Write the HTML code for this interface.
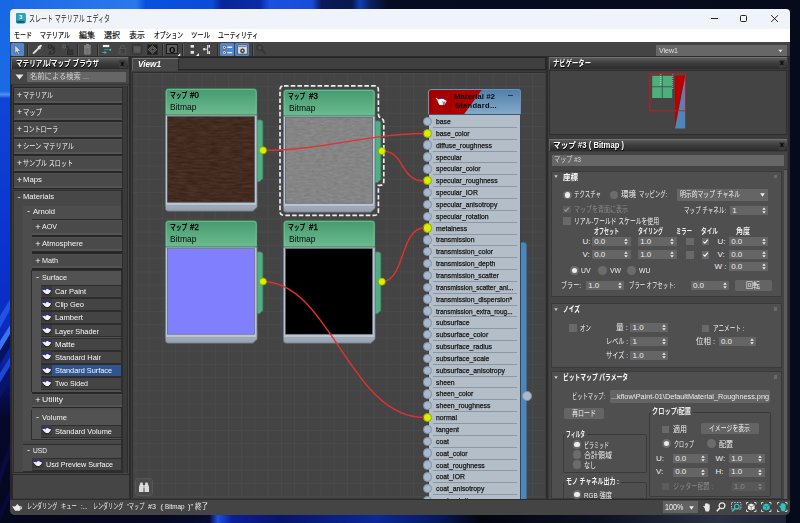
<!DOCTYPE html>
<html lang="ja">
<head>
<meta charset="utf-8">
<title>スレート マテリアル エディタ</title>
<style>
html,body{margin:0;padding:0;}
body{width:800px;height:523px;overflow:hidden;position:relative;background:#050a1c;font-family:"Liberation Sans","Noto Sans CJK JP",sans-serif;}
.r{position:absolute;box-sizing:border-box;}
.t{position:absolute;white-space:nowrap;transform-origin:0 50%;letter-spacing:0;}
svg{position:absolute;overflow:visible;}
#desk{position:absolute;left:0;top:0;width:800px;height:523px;}
#win{position:absolute;left:9.5px;top:9px;width:780.5px;height:505.8px;border-radius:4px 4px 5px 5px;overflow:hidden;background:#444444;}
#abs{position:absolute;left:-9.5px;top:-9px;width:800px;height:523px;}
</style>
</head>
<body>
<svg id="desk" width="800" height="523" viewBox="0 0 800 523">
<defs>
<linearGradient id="dgt" x1="0" x2="1" y1="0" y2="0">
<stop offset="0" stop-color="#1a68e4"/><stop offset="0.1" stop-color="#2572ea"/><stop offset="0.17" stop-color="#2a78ec"/><stop offset="0.182" stop-color="#0a50e0"/><stop offset="0.265" stop-color="#0a4cd8"/><stop offset="0.277" stop-color="#08259a"/><stop offset="0.325" stop-color="#0a2aa8"/><stop offset="0.337" stop-color="#1a50e0"/><stop offset="0.39" stop-color="#1a4cd8"/><stop offset="0.402" stop-color="#0a1a5a"/><stop offset="0.44" stop-color="#091850"/><stop offset="0.45" stop-color="#1040b0"/><stop offset="0.463" stop-color="#0a2060"/><stop offset="0.485" stop-color="#060d22"/><stop offset="1" stop-color="#050b1a"/>
</linearGradient>
<linearGradient id="dgl" x1="0" x2="0" y1="0" y2="1">
<stop offset="0" stop-color="#1668e3"/><stop offset="0.174" stop-color="#1a6ae6"/><stop offset="0.181" stop-color="#4a92f0"/><stop offset="0.188" stop-color="#0f45d6"/><stop offset="0.5" stop-color="#0a32cc"/><stop offset="0.62" stop-color="#0a2cc0"/><stop offset="0.70" stop-color="#0a20a0"/><stop offset="0.745" stop-color="#080f58"/><stop offset="0.8" stop-color="#05082a"/><stop offset="1" stop-color="#04081c"/>
</linearGradient>
<linearGradient id="dgb" x1="0" x2="1" y1="0" y2="0">
<stop offset="0" stop-color="#04061a"/><stop offset="0.2" stop-color="#050820"/><stop offset="0.262" stop-color="#060c34"/><stop offset="0.272" stop-color="#1f4fe0"/><stop offset="0.29" stop-color="#0b1e96"/><stop offset="0.35" stop-color="#08146a"/><stop offset="0.47" stop-color="#0a2896"/><stop offset="0.55" stop-color="#06185a"/><stop offset="0.6" stop-color="#03050f"/><stop offset="0.75" stop-color="#0c1222"/><stop offset="0.9" stop-color="#2a3142"/><stop offset="1" stop-color="#1c2334"/>
</linearGradient>
</defs>
<rect x="0" y="0" width="800" height="523" fill="#050b1a"/>
<rect x="0" y="0" width="800" height="12" fill="url(#dgt)"/>
<rect x="0" y="510" width="800" height="13" fill="url(#dgb)"/>
<rect x="0" y="0" width="14" height="523" fill="url(#dgl)"/>
<rect x="786" y="0" width="14" height="523" fill="#050b1a"/>
<g>
<path d="M0 328L12 306V296L0 316Z" fill="#2052e6"/>
<path d="M0 351L12 331V322L0 341Z" fill="#3a72f2"/>
<path d="M0 364L12 344V331L0 351Z" fill="#07125e"/>
<path d="M0 383L12 363V354L0 373Z" fill="#1c46d4"/>
<path d="M0 398L12 378V363L0 383Z" fill="#08146a"/>
<path d="M0 484L12 450V438L0 470Z" fill="#080a40"/>
<path d="M0 521L12 494V484L0 510Z" fill="#07093a"/>
</g>
</svg>
<div id="win"><div id="abs">
<div class="r" style="left:9px;top:9px;width:782px;height:20px;background:#f0f3fa;"></div>
<div class="r" style="left:9px;top:29px;width:782px;height:13px;background:#ffffff;"></div>
<svg style="left:15.6px;top:13.4px" width="9.6" height="10.4" viewBox="0 0 9.6 10.4"><rect x="0" y="0" width="9.6" height="10.4" rx="1.6" fill="#167a92"/><rect x="0" y="0" width="9.6" height="7.6" rx="1.6" fill="#2aa3bf"/><rect x="0" y="5" width="9.6" height="2.6" fill="#2aa3bf"/><rect x="1.8" y="8.2" width="6" height="1.3" fill="#0c5668"/></svg>
<span id="t1" class="t " style="left:18.9px;top:12.2px;font-size:6px;line-height:10px;color:#ffffff;font-weight:700;">3</span>
<span id="t2" class="t " style="left:29px;top:12.8px;font-size:9px;line-height:13px;color:#1a1a1a;font-weight:400;transform:scaleX(0.6678);">スレート マテリアル エディタ</span>
<svg style="left:700px;top:9px" width="90" height="20" viewBox="0 0 90 20">
<path d="M11 9.5H18" stroke="#222" stroke-width="1" fill="none"/>
<rect x="40.5" y="6.5" width="6" height="6" rx="1" stroke="#222" stroke-width="1" fill="none"/>
<path d="M71.2 6.2L78 13M78 6.2L71.2 13" stroke="#222" stroke-width="1" fill="none"/>
</svg>
<span id="t3" class="t " style="left:14px;top:30.2px;font-size:8px;line-height:12px;color:#000000;font-weight:400;transform:scaleX(0.7500);-webkit-text-stroke:0.15px #000;">モード</span>
<span id="t4" class="t " style="left:40px;top:30.2px;font-size:8px;line-height:12px;color:#000000;font-weight:400;transform:scaleX(0.7515);-webkit-text-stroke:0.15px #000;">マテリアル</span>
<span id="t5" class="t " style="left:79px;top:30.2px;font-size:8px;line-height:12px;color:#000000;font-weight:400;transform:scaleX(1.0000);-webkit-text-stroke:0.15px #000;">編集</span>
<span id="t6" class="t " style="left:104px;top:30.2px;font-size:8px;line-height:12px;color:#000000;font-weight:400;transform:scaleX(1.0000);-webkit-text-stroke:0.15px #000;">選択</span>
<span id="t7" class="t " style="left:129px;top:30.2px;font-size:8px;line-height:12px;color:#000000;font-weight:400;transform:scaleX(1.0000);-webkit-text-stroke:0.15px #000;">表示</span>
<span id="t8" class="t " style="left:154px;top:30.2px;font-size:8px;line-height:12px;color:#000000;font-weight:400;transform:scaleX(0.7250);-webkit-text-stroke:0.15px #000;">オプション</span>
<span id="t9" class="t " style="left:191px;top:30.2px;font-size:8px;line-height:12px;color:#000000;font-weight:400;transform:scaleX(0.7917);-webkit-text-stroke:0.15px #000;">ツール</span>
<span id="t10" class="t " style="left:218px;top:30.2px;font-size:8px;line-height:12px;color:#000000;font-weight:400;transform:scaleX(0.7267);-webkit-text-stroke:0.15px #000;">ユーティリティ</span>
<div class="r" style="left:9px;top:42px;width:782px;height:15px;background:#444444;"></div>
<div class="r" style="left:11px;top:43px;width:13.3px;height:12.8px;background:#4f87d2;border-radius:1.5px;"></div>
<svg style="left:11px;top:43px" width="14" height="13" viewBox="0 0 14 13"><path d="M3.8 2V10.4L5.9 8.6L7.3 11.5L8.6 10.9L7.3 8.1H9.9Z" fill="#d6d6d6" stroke="#4a4a4a" stroke-width="0.5"/></svg>
<div class="r" style="left:27px;top:44px;width:1px;height:12px;background:#2a2a2a;"></div>
<div class="r" style="left:28px;top:44px;width:1px;height:12px;background:#5a5a5a;"></div>
<div class="r" style="left:76.5px;top:44px;width:1px;height:12px;background:#2a2a2a;"></div>
<div class="r" style="left:77.5px;top:44px;width:1px;height:12px;background:#5a5a5a;"></div>
<div class="r" style="left:97px;top:44px;width:1px;height:12px;background:#2a2a2a;"></div>
<div class="r" style="left:98px;top:44px;width:1px;height:12px;background:#5a5a5a;"></div>
<div class="r" style="left:162px;top:44px;width:1px;height:12px;background:#2a2a2a;"></div>
<div class="r" style="left:163px;top:44px;width:1px;height:12px;background:#5a5a5a;"></div>
<div class="r" style="left:181.5px;top:44px;width:1px;height:12px;background:#2a2a2a;"></div>
<div class="r" style="left:182.5px;top:44px;width:1px;height:12px;background:#5a5a5a;"></div>
<div class="r" style="left:216.5px;top:44px;width:1px;height:12px;background:#2a2a2a;"></div>
<div class="r" style="left:217.5px;top:44px;width:1px;height:12px;background:#5a5a5a;"></div>
<div class="r" style="left:251.5px;top:44px;width:1px;height:12px;background:#2a2a2a;"></div>
<div class="r" style="left:252.5px;top:44px;width:1px;height:12px;background:#5a5a5a;"></div>
<svg style="left:31px;top:43px" width="13" height="13" viewBox="0 0 13 13"><path d="M1.6 11L2.2 9.2L7 4.4L8.4 5.8L3.6 10.6Z" fill="#e4e4e4"/><path d="M6.8 3.4L9.4 6" stroke="#e4e4e4" stroke-width="1.2"/><path d="M8 4.6L9.8 2.8" stroke="#e4e4e4" stroke-width="2.2" stroke-linecap="round"/></svg>
<svg style="left:46px;top:43px" width="12" height="13" viewBox="0 0 12 13"><g fill="none" stroke="#2a2a2a" stroke-width="1.1"><circle cx="4" cy="3.6" r="1.8"/><path d="M6 2.6L9 5.4L6.5 7.6M9.2 7.4L7 11H3L5 8" /></g><circle cx="7.4" cy="5.2" r="1.5" fill="#303030"/></svg>
<svg style="left:61px;top:43px" width="14" height="13" viewBox="0 0 14 13"><circle cx="3.2" cy="3.4" r="1.6" fill="none" stroke="#6e6e6e" stroke-width="0.9"/><path d="M4.8 3.4Q7.5 3 7.6 6.5" stroke="#2a2a2a" stroke-width="1.2" fill="none"/><rect x="6.4" y="7" width="5.4" height="4.6" fill="#353535" stroke="#2a2a2a" stroke-width="0.8"/></svg>
<svg style="left:83px;top:43px" width="9" height="13" viewBox="0 0 9 13"><rect x="1.2" y="3.6" width="6.4" height="8" rx="0.8" fill="#858585"/><rect x="0.8" y="2.2" width="7.2" height="1.3" fill="#8c8c8c"/><rect x="3" y="1" width="2.8" height="1.3" fill="#8c8c8c"/><path d="M3 5V10.6M4.4 5V10.6M5.8 5V10.6" stroke="#5c5c5c" stroke-width="0.6"/></svg>
<svg style="left:101px;top:43px" width="12" height="13" viewBox="101 43 12 13"><rect x="102.9" y="44.9" width="6.4" height="2.2" fill="#ececec"/><path d="M104.6 49.6H109.6" stroke="#2cc0c0" stroke-width="0.8" stroke-dasharray="1.4 0.6" fill="none"/><circle cx="110.3" cy="49.7" r="1" fill="#2cc0c0"/><path d="M102.2 52.4H105" stroke="#2cc0c0" stroke-width="0.8" fill="none"/><path d="M104.4 50.9L107 52.4L104.4 53.9Z" fill="#2cc0c0"/></svg>
<svg style="left:117px;top:43px" width="11" height="13" viewBox="117 43 11 13"><rect x="119.2" y="48.6" width="6.6" height="5.3" fill="#3e3e3e" stroke="#5a5a5a" stroke-width="0.8"/><path d="M120.6 48.6V47Q120.6 45.2 122.5 45.2Q124.4 45.2 124.4 47" stroke="#5a5a5a" stroke-width="0.9" fill="none"/><circle cx="120.6" cy="51.3" r="0.9" fill="#5a5a5a"/></svg>
<svg style="left:131px;top:43px" width="13" height="13" viewBox="131 43 13 13"><rect x="132.4" y="44.8" width="9.4" height="9.4" rx="1" fill="#484848" stroke="#303030" stroke-width="0.9"/><rect x="134" y="46.4" width="6.2" height="6.2" rx="1" fill="#5a5a5a"/></svg>
<svg style="left:146px;top:43px" width="13" height="13" viewBox="0 0 13 13"><rect x="1.4" y="1.6" width="10.2" height="10" fill="#1c1c1c"/><path d="M6.5 2.6L10.8 6.6L6.5 10.6L2.2 6.6Z" fill="#3c3c3c" stroke="#808080" stroke-width="0.7"/><circle cx="6.5" cy="6.6" r="1.7" fill="#2a2a2a" stroke="#909090" stroke-width="0.6"/></svg>
<div class="r" style="left:166.4px;top:44px;width:11.3px;height:10.4px;background:#5e5e5e;border:1px solid #1c1c1c;"></div>
<span id="t11" class="t " style="left:168.7px;top:42.5px;font-size:9.6px;line-height:13.6px;color:#0a0a0a;font-weight:700;transform:scaleX(1.2200);">0</span>
<svg style="left:176.5px;top:53px" width="4" height="4" viewBox="0 0 4 4"><path d="M3.3 0.3V3.3H0.3Z" fill="#ececec"/></svg>
<svg style="left:187px;top:43px" width="13" height="14" viewBox="187 43 13 14"><rect x="190.6" y="45" width="3.4" height="2.6" fill="#e6e6e6"/><rect x="190.6" y="50.9" width="3.4" height="2.8" fill="#e6e6e6"/><path d="M199 53V56H196Z" fill="#ececec"/></svg>
<svg style="left:202px;top:43px" width="10" height="13" viewBox="202 43 10 13"><path d="M204 49.2H207.4" stroke="#dcdcdc" stroke-width="0.9" fill="none"/><rect x="203.2" y="48.1" width="2" height="2.2" fill="#f0f0f0"/><path d="M207.6 45V54" stroke="#dcdcdc" stroke-width="1" fill="none"/><rect x="208.4" y="45" width="1.6" height="2.6" fill="#e0e0e0"/><rect x="208.4" y="51.2" width="1.6" height="2.8" fill="#e0e0e0"/></svg>
<div class="r" style="left:220.1px;top:43px;width:13.9px;height:12.8px;background:#4f87d2;border-radius:1.5px;"></div>
<div class="r" style="left:235.3px;top:43px;width:13.8px;height:12.8px;background:#4f87d2;border-radius:1.5px;"></div>
<svg style="left:220px;top:43px" width="14" height="13" viewBox="220 43 14 13"><g fill="#e8e8e8" stroke="#3a3a3a" stroke-width="0.5"><circle cx="224.3" cy="47.3" r="1.9"/><circle cx="224.3" cy="52.6" r="1.9"/></g><circle cx="224.3" cy="47.3" r="0.7" fill="#333"/><circle cx="224.3" cy="52.6" r="0.7" fill="#333"/><path d="M227.4 47.3H232.2M227.4 52.6H232.2" stroke="#f0f0f0" stroke-width="1.4"/></svg>
<svg style="left:235px;top:43px" width="14" height="13" viewBox="235 43 14 13"><rect x="237.8" y="45" width="9.4" height="9" fill="#dedede" stroke="#3a3a3a" stroke-width="0.6"/><path d="M238.4 46.6H246.6" stroke="#555" stroke-width="0.7"/><circle cx="242.5" cy="50.8" r="2.1" fill="#4a4a4a" stroke="#222" stroke-width="0.5"/><circle cx="242.5" cy="50.8" r="0.8" fill="#f4f4f4"/></svg>
<svg style="left:255px;top:43px" width="13" height="13" viewBox="255 43 13 13"><circle cx="259.6" cy="47.6" r="2.9" fill="#4a4a4a" stroke="#2e2e2e" stroke-width="1"/><path d="M261.8 49.8L265.2 53.4" stroke="#2e2e2e" stroke-width="2"/><path d="M262.2 50.2L264.8 53" stroke="#484848" stroke-width="0.8"/></svg>
<div class="r" style="left:656px;top:45px;width:131px;height:10.5px;background:#676767;"></div>
<span id="t12" class="t " style="left:659px;top:44.55px;font-size:7.5px;line-height:11.5px;color:#e0e0e0;font-weight:400;transform:scaleX(0.9361);">View1</span>
<svg style="left:777.5px;top:48.6px" width="4.8" height="4" viewBox="0 0 6 5"><path d="M0.5 0.8H5.5L3 4.2Z" fill="#eaeaea"/></svg>
<div class="r" style="left:10px;top:56px;width:780px;height:1.2px;background:#2c2c2c;"></div>
<div class="r" style="left:9px;top:57px;width:120px;height:442px;background:#3b3b3b;"></div>
<div class="r" style="left:11px;top:57px;width:117.3px;height:12px;background:linear-gradient(#5a5a5a,#3e3e3e 45%,#2b2b2b);border-top:1px solid #727272;border-left:1px solid #606060;"></div>
<span id="t13" class="t " style="left:16.4px;top:56.65px;font-size:8.5px;line-height:12.5px;color:#ffffff;font-weight:700;transform:scaleX(0.7783);text-shadow:0.6px 0.6px 0 #000;">マテリアル/マップ ブラウザ</span>
<div class="r" style="left:119px;top:60px;width:6.5px;height:7.5px;background:#3c3c3c;border-radius:1px;"></div>
<span id="t14" class="t " style="left:120.2px;top:57.85px;font-size:7.5px;line-height:11.5px;color:#000000;font-weight:700;">x</span>
<div class="r" style="left:11px;top:69px;width:117.5px;height:429px;background:#454545;"></div>
<svg style="left:15px;top:74px" width="9" height="6" viewBox="0 0 9 6"><path d="M0.5 0.5H8.5L4.5 5.5Z" fill="#e6e6e6"/></svg>
<div class="r" style="left:27px;top:71.5px;width:99px;height:10.5px;background:#666666;"></div>
<span id="t15" class="t " style="left:29.5px;top:71.4px;font-size:8px;line-height:12px;color:#d0d0d0;font-weight:400;transform:scaleX(0.9125);">名前による検索 ...</span>
<div class="r" style="left:11px;top:84px;width:117.5px;height:1px;background:#333;"></div>
<div class="r" style="left:9px;top:85px;width:3.6px;height:414px;background:#282828;"></div>
<div class="r" style="left:9px;top:57px;width:2px;height:28px;background:#303030;"></div>
<div class="r" style="left:12px;top:86px;width:110px;height:387px;background:#3e3e3e;"></div>
<div class="r" style="left:122px;top:86px;width:5.5px;height:387px;background:#3a3a3a;border-left:1px solid #2c2c2c;border-right:1px solid #2c2c2c;"></div>
<div class="r" style="left:13px;top:86.8px;width:109px;height:17.7px;background:#272727;"></div>
<div class="r" style="left:13.5px;top:88px;width:108.3px;height:15.3px;background:#4a4a4a;border-bottom:2.8px solid #545454;border-top:0.6px solid #505050;"></div>
<span id="t16" class="t " style="left:16.8px;top:89.45px;font-size:9px;line-height:13px;color:#f0f0f0;font-weight:400;">+</span>
<span id="t17" class="t " style="left:23.1px;top:90.05px;font-size:7.6px;line-height:11.6px;color:#f4f4f4;font-weight:400;transform:scaleX(0.7914);">マテリアル</span>
<div class="r" style="left:13px;top:103.8px;width:109px;height:17.7px;background:#272727;"></div>
<div class="r" style="left:13.5px;top:105px;width:108.3px;height:15.3px;background:#4a4a4a;border-bottom:2.8px solid #545454;border-top:0.6px solid #505050;"></div>
<span id="t18" class="t " style="left:16.8px;top:106.45px;font-size:9px;line-height:13px;color:#f0f0f0;font-weight:400;">+</span>
<span id="t19" class="t " style="left:23.1px;top:107.05px;font-size:7.6px;line-height:11.6px;color:#f4f4f4;font-weight:400;transform:scaleX(0.8340);">マップ</span>
<div class="r" style="left:13px;top:120.8px;width:109px;height:17.7px;background:#272727;"></div>
<div class="r" style="left:13.5px;top:122px;width:108.3px;height:15.3px;background:#4a4a4a;border-bottom:2.8px solid #545454;border-top:0.6px solid #505050;"></div>
<span id="t20" class="t " style="left:16.8px;top:123.45px;font-size:9px;line-height:13px;color:#f0f0f0;font-weight:400;">+</span>
<span id="t21" class="t " style="left:23.1px;top:124.05px;font-size:7.6px;line-height:11.6px;color:#f4f4f4;font-weight:400;transform:scaleX(0.7682);">コントローラ</span>
<div class="r" style="left:13px;top:137.8px;width:109px;height:17.7px;background:#272727;"></div>
<div class="r" style="left:13.5px;top:139px;width:108.3px;height:15.3px;background:#4a4a4a;border-bottom:2.8px solid #545454;border-top:0.6px solid #505050;"></div>
<span id="t22" class="t " style="left:16.8px;top:140.45px;font-size:9px;line-height:13px;color:#f0f0f0;font-weight:400;">+</span>
<span id="t23" class="t " style="left:23.1px;top:141.05px;font-size:7.6px;line-height:11.6px;color:#f4f4f4;font-weight:400;transform:scaleX(0.8172);">シーン マテリアル</span>
<div class="r" style="left:13px;top:154.8px;width:109px;height:17.7px;background:#272727;"></div>
<div class="r" style="left:13.5px;top:156px;width:108.3px;height:15.3px;background:#4a4a4a;border-bottom:2.8px solid #545454;border-top:0.6px solid #505050;"></div>
<span id="t24" class="t " style="left:16.8px;top:157.45px;font-size:9px;line-height:13px;color:#f0f0f0;font-weight:400;">+</span>
<span id="t25" class="t " style="left:23.1px;top:158.05px;font-size:7.6px;line-height:11.6px;color:#f4f4f4;font-weight:400;transform:scaleX(0.7982);">サンプル スロット</span>
<div class="r" style="left:13px;top:171.8px;width:109px;height:17.7px;background:#272727;"></div>
<div class="r" style="left:13.5px;top:173px;width:108.3px;height:15.3px;background:#4a4a4a;border-bottom:2.8px solid #545454;border-top:0.6px solid #505050;"></div>
<span id="t26" class="t " style="left:16.8px;top:174.45px;font-size:9px;line-height:13px;color:#f0f0f0;font-weight:400;">+</span>
<span id="t27" class="t " style="left:23.1px;top:174.05px;font-size:8px;line-height:12px;color:#f4f4f4;font-weight:400;transform:scaleX(0.9712);">Maps</span>
<div class="r" style="left:13px;top:190px;width:108.5px;height:282.5px;background:#2d2d2d;"></div>
<div class="r" style="left:13.5px;top:191px;width:107.5px;height:281px;background:#474747;"></div>
<span id="t28" class="t " style="left:17.5px;top:190.5px;font-size:9px;line-height:13px;color:#f0f0f0;font-weight:400;">-</span>
<span id="t29" class="t " style="left:23.4px;top:191.3px;font-size:8px;line-height:12px;color:#f4f4f4;font-weight:400;transform:scaleX(0.9552);">Materials</span>
<div class="r" style="left:22.5px;top:206px;width:99px;height:235px;background:#2d2d2d;"></div>
<div class="r" style="left:23.3px;top:206px;width:97.7px;height:234.5px;background:#4d4d4d;"></div>
<span id="t30" class="t " style="left:27px;top:205.1px;font-size:9px;line-height:13px;color:#f0f0f0;font-weight:400;">-</span>
<span id="t31" class="t " style="left:33px;top:205.9px;font-size:8px;line-height:12px;color:#f4f4f4;font-weight:400;transform:scaleX(0.9514);">Arnold</span>
<div class="r" style="left:31.5px;top:218.8px;width:90.5px;height:17.2px;background:#272727;"></div>
<div class="r" style="left:32px;top:220px;width:89.8px;height:14.8px;background:#4a4a4a;border-bottom:2.8px solid #545454;border-top:0.6px solid #505050;"></div>
<span id="t32" class="t " style="left:35.3px;top:221.2px;font-size:9px;line-height:13px;color:#f0f0f0;font-weight:400;">+</span>
<span id="t33" class="t " style="left:41.6px;top:220.8px;font-size:8px;line-height:12px;color:#f4f4f4;font-weight:400;transform:scaleX(0.8872);">AOV</span>
<div class="r" style="left:31.5px;top:235.5px;width:90.5px;height:17.2px;background:#272727;"></div>
<div class="r" style="left:32px;top:236.7px;width:89.8px;height:14.8px;background:#4a4a4a;border-bottom:2.8px solid #545454;border-top:0.6px solid #505050;"></div>
<span id="t34" class="t " style="left:35.3px;top:237.9px;font-size:9px;line-height:13px;color:#f0f0f0;font-weight:400;">+</span>
<span id="t35" class="t " style="left:41.6px;top:237.5px;font-size:8px;line-height:12px;color:#f4f4f4;font-weight:400;transform:scaleX(0.9504);">Atmosphere</span>
<div class="r" style="left:31.5px;top:252.5px;width:90.5px;height:17.2px;background:#272727;"></div>
<div class="r" style="left:32px;top:253.7px;width:89.8px;height:14.8px;background:#4a4a4a;border-bottom:2.8px solid #545454;border-top:0.6px solid #505050;"></div>
<span id="t36" class="t " style="left:35.3px;top:254.9px;font-size:9px;line-height:13px;color:#f0f0f0;font-weight:400;">+</span>
<span id="t37" class="t " style="left:41.6px;top:254.5px;font-size:8px;line-height:12px;color:#f4f4f4;font-weight:400;transform:scaleX(0.8990);">Math</span>
<div class="r" style="left:31px;top:270px;width:90.5px;height:122px;background:#2d2d2d;"></div>
<div class="r" style="left:31.5px;top:270.5px;width:89.5px;height:121px;background:#525252;"></div>
<span id="t38" class="t " style="left:36px;top:271.1px;font-size:9px;line-height:13px;color:#f0f0f0;font-weight:400;">-</span>
<span id="t39" class="t " style="left:42px;top:271.9px;font-size:8px;line-height:12px;color:#f4f4f4;font-weight:400;transform:scaleX(0.9065);">Surface</span>
<div class="r" style="left:40.5px;top:285px;width:80.5px;height:13px;background:#2d2d2d;"></div>
<div class="r" style="left:41px;top:286px;width:79.5px;height:11px;background:#444444;"></div>
<svg style="left:41px;top:285.7px" width="11" height="11" viewBox="0 0 11 11"><rect width="11" height="10.4" fill="#3a3a3a"/><path d="M1.2 4.6L3.4 7.4Q4.4 8.9 6 8.9Q8.2 8.9 9.6 6.6L10.4 4.4L8 3.6L6 2.2L4.2 3.8L2.6 3.6Z" fill="#111"/><path d="M1 4L3.4 6.8Q4.4 8.2 6 8.2Q8 8.2 9.4 6L10.2 4.2L7.8 3.2L6 1.8L4.2 3.6L2.6 3.2Z" fill="#f2f2f2"/><path d="M1 4L2.6 2.6L4 3.4L5.8 1.2L7.8 2.4L10.2 3.4L10 4.4L7.6 3.6L6 2.8L4.4 4.4L3 3.8L1.4 4.6Z" fill="#2424a8"/></svg>
<span id="t40" class="t " style="left:54.5px;top:286.1px;font-size:8px;line-height:12px;color:#f8f8f8;font-weight:400;transform:scaleX(0.9293);">Car Paint</span>
<div class="r" style="left:40.5px;top:298.15px;width:80.5px;height:13px;background:#2d2d2d;"></div>
<div class="r" style="left:41px;top:299.15px;width:79.5px;height:11px;background:#444444;"></div>
<svg style="left:41px;top:298.85px" width="11" height="11" viewBox="0 0 11 11"><rect width="11" height="10.4" fill="#3a3a3a"/><path d="M1.2 4.6L3.4 7.4Q4.4 8.9 6 8.9Q8.2 8.9 9.6 6.6L10.4 4.4L8 3.6L6 2.2L4.2 3.8L2.6 3.6Z" fill="#111"/><path d="M1 4L3.4 6.8Q4.4 8.2 6 8.2Q8 8.2 9.4 6L10.2 4.2L7.8 3.2L6 1.8L4.2 3.6L2.6 3.2Z" fill="#f2f2f2"/><path d="M1 4L2.6 2.6L4 3.4L5.8 1.2L7.8 2.4L10.2 3.4L10 4.4L7.6 3.6L6 2.8L4.4 4.4L3 3.8L1.4 4.6Z" fill="#2424a8"/></svg>
<span id="t41" class="t " style="left:54.5px;top:299.25px;font-size:8px;line-height:12px;color:#f8f8f8;font-weight:400;transform:scaleX(0.9317);">Clip Geo</span>
<div class="r" style="left:40.5px;top:311.3px;width:80.5px;height:13px;background:#2d2d2d;"></div>
<div class="r" style="left:41px;top:312.3px;width:79.5px;height:11px;background:#444444;"></div>
<svg style="left:41px;top:312px" width="11" height="11" viewBox="0 0 11 11"><rect width="11" height="10.4" fill="#3a3a3a"/><path d="M1.2 4.6L3.4 7.4Q4.4 8.9 6 8.9Q8.2 8.9 9.6 6.6L10.4 4.4L8 3.6L6 2.2L4.2 3.8L2.6 3.6Z" fill="#111"/><path d="M1 4L3.4 6.8Q4.4 8.2 6 8.2Q8 8.2 9.4 6L10.2 4.2L7.8 3.2L6 1.8L4.2 3.6L2.6 3.2Z" fill="#f2f2f2"/><path d="M1 4L2.6 2.6L4 3.4L5.8 1.2L7.8 2.4L10.2 3.4L10 4.4L7.6 3.6L6 2.8L4.4 4.4L3 3.8L1.4 4.6Z" fill="#2424a8"/></svg>
<span id="t42" class="t " style="left:54.5px;top:312.4px;font-size:8px;line-height:12px;color:#f8f8f8;font-weight:400;transform:scaleX(0.9537);">Lambert</span>
<div class="r" style="left:40.5px;top:324.45px;width:80.5px;height:13px;background:#2d2d2d;"></div>
<div class="r" style="left:41px;top:325.45px;width:79.5px;height:11px;background:#444444;"></div>
<svg style="left:41px;top:325.15px" width="11" height="11" viewBox="0 0 11 11"><rect width="11" height="10.4" fill="#3a3a3a"/><path d="M1.2 4.6L3.4 7.4Q4.4 8.9 6 8.9Q8.2 8.9 9.6 6.6L10.4 4.4L8 3.6L6 2.2L4.2 3.8L2.6 3.6Z" fill="#111"/><path d="M1 4L3.4 6.8Q4.4 8.2 6 8.2Q8 8.2 9.4 6L10.2 4.2L7.8 3.2L6 1.8L4.2 3.6L2.6 3.2Z" fill="#f2f2f2"/><path d="M1 4L2.6 2.6L4 3.4L5.8 1.2L7.8 2.4L10.2 3.4L10 4.4L7.6 3.6L6 2.8L4.4 4.4L3 3.8L1.4 4.6Z" fill="#2424a8"/></svg>
<span id="t43" class="t " style="left:54.5px;top:325.55px;font-size:8px;line-height:12px;color:#f8f8f8;font-weight:400;transform:scaleX(0.9161);">Layer Shader</span>
<div class="r" style="left:40.5px;top:337.6px;width:80.5px;height:13px;background:#2d2d2d;"></div>
<div class="r" style="left:41px;top:338.6px;width:79.5px;height:11px;background:#444444;"></div>
<svg style="left:41px;top:338.3px" width="11" height="11" viewBox="0 0 11 11"><rect width="11" height="10.4" fill="#3a3a3a"/><path d="M1.2 4.6L3.4 7.4Q4.4 8.9 6 8.9Q8.2 8.9 9.6 6.6L10.4 4.4L8 3.6L6 2.2L4.2 3.8L2.6 3.6Z" fill="#111"/><path d="M1 4L3.4 6.8Q4.4 8.2 6 8.2Q8 8.2 9.4 6L10.2 4.2L7.8 3.2L6 1.8L4.2 3.6L2.6 3.2Z" fill="#f2f2f2"/><path d="M1 4L2.6 2.6L4 3.4L5.8 1.2L7.8 2.4L10.2 3.4L10 4.4L7.6 3.6L6 2.8L4.4 4.4L3 3.8L1.4 4.6Z" fill="#2424a8"/></svg>
<span id="t44" class="t " style="left:54.5px;top:338.7px;font-size:8px;line-height:12px;color:#f8f8f8;font-weight:400;transform:scaleX(0.9992);">Matte</span>
<div class="r" style="left:40.5px;top:350.75px;width:80.5px;height:13px;background:#2d2d2d;"></div>
<div class="r" style="left:41px;top:351.75px;width:79.5px;height:11px;background:#444444;"></div>
<svg style="left:41px;top:351.45px" width="11" height="11" viewBox="0 0 11 11"><rect width="11" height="10.4" fill="#3a3a3a"/><path d="M1.2 4.6L3.4 7.4Q4.4 8.9 6 8.9Q8.2 8.9 9.6 6.6L10.4 4.4L8 3.6L6 2.2L4.2 3.8L2.6 3.6Z" fill="#111"/><path d="M1 4L3.4 6.8Q4.4 8.2 6 8.2Q8 8.2 9.4 6L10.2 4.2L7.8 3.2L6 1.8L4.2 3.6L2.6 3.2Z" fill="#f2f2f2"/><path d="M1 4L2.6 2.6L4 3.4L5.8 1.2L7.8 2.4L10.2 3.4L10 4.4L7.6 3.6L6 2.8L4.4 4.4L3 3.8L1.4 4.6Z" fill="#2424a8"/></svg>
<span id="t45" class="t " style="left:54.5px;top:351.85px;font-size:8px;line-height:12px;color:#f8f8f8;font-weight:400;transform:scaleX(0.9319);">Standard Hair</span>
<div class="r" style="left:40.5px;top:363.9px;width:80.5px;height:13px;background:#2d2d2d;"></div>
<div class="r" style="left:41px;top:364.9px;width:79.5px;height:11px;background:#2f5590;"></div>
<svg style="left:41px;top:364.6px" width="11" height="11" viewBox="0 0 11 11"><rect width="11" height="10.4" fill="#3a3a3a"/><path d="M1.2 4.6L3.4 7.4Q4.4 8.9 6 8.9Q8.2 8.9 9.6 6.6L10.4 4.4L8 3.6L6 2.2L4.2 3.8L2.6 3.6Z" fill="#111"/><path d="M1 4L3.4 6.8Q4.4 8.2 6 8.2Q8 8.2 9.4 6L10.2 4.2L7.8 3.2L6 1.8L4.2 3.6L2.6 3.2Z" fill="#f2f2f2"/><path d="M1 4L2.6 2.6L4 3.4L5.8 1.2L7.8 2.4L10.2 3.4L10 4.4L7.6 3.6L6 2.8L4.4 4.4L3 3.8L1.4 4.6Z" fill="#2424a8"/></svg>
<span id="t46" class="t " style="left:54.5px;top:365px;font-size:8px;line-height:12px;color:#f8f8f8;font-weight:400;transform:scaleX(0.9154);">Standard Surface</span>
<div class="r" style="left:40.5px;top:377.05px;width:80.5px;height:13px;background:#2d2d2d;"></div>
<div class="r" style="left:41px;top:378.05px;width:79.5px;height:11px;background:#444444;"></div>
<svg style="left:41px;top:377.75px" width="11" height="11" viewBox="0 0 11 11"><rect width="11" height="10.4" fill="#3a3a3a"/><path d="M1.2 4.6L3.4 7.4Q4.4 8.9 6 8.9Q8.2 8.9 9.6 6.6L10.4 4.4L8 3.6L6 2.2L4.2 3.8L2.6 3.6Z" fill="#111"/><path d="M1 4L3.4 6.8Q4.4 8.2 6 8.2Q8 8.2 9.4 6L10.2 4.2L7.8 3.2L6 1.8L4.2 3.6L2.6 3.2Z" fill="#f2f2f2"/><path d="M1 4L2.6 2.6L4 3.4L5.8 1.2L7.8 2.4L10.2 3.4L10 4.4L7.6 3.6L6 2.8L4.4 4.4L3 3.8L1.4 4.6Z" fill="#2424a8"/></svg>
<span id="t47" class="t " style="left:54.5px;top:378.15px;font-size:8px;line-height:12px;color:#f8f8f8;font-weight:400;transform:scaleX(0.8833);">Two Sided</span>
<div class="r" style="left:31.5px;top:392.3px;width:90.5px;height:16.2px;background:#272727;"></div>
<div class="r" style="left:32px;top:393.5px;width:89.8px;height:13.8px;background:#4a4a4a;border-bottom:2.8px solid #545454;border-top:0.6px solid #505050;"></div>
<span id="t48" class="t " style="left:35.3px;top:394.2px;font-size:9px;line-height:13px;color:#f0f0f0;font-weight:400;">+</span>
<span id="t49" class="t " style="left:41.6px;top:393.8px;font-size:8px;line-height:12px;color:#f4f4f4;font-weight:400;transform:scaleX(1.0735);">Utility</span>
<div class="r" style="left:31px;top:409.5px;width:90.5px;height:30px;background:#2d2d2d;"></div>
<div class="r" style="left:31.5px;top:410px;width:89.5px;height:29px;background:#525252;"></div>
<span id="t50" class="t " style="left:36px;top:410.8px;font-size:9px;line-height:13px;color:#f0f0f0;font-weight:400;">-</span>
<span id="t51" class="t " style="left:42px;top:411.6px;font-size:8px;line-height:12px;color:#f4f4f4;font-weight:400;transform:scaleX(0.9368);">Volume</span>
<div class="r" style="left:40.5px;top:424.5px;width:80.5px;height:13px;background:#2d2d2d;"></div>
<div class="r" style="left:41px;top:425.5px;width:79.5px;height:11px;background:#444444;"></div>
<svg style="left:41px;top:425.2px" width="11" height="11" viewBox="0 0 11 11"><rect width="11" height="10.4" fill="#3a3a3a"/><path d="M1.2 4.6L3.4 7.4Q4.4 8.9 6 8.9Q8.2 8.9 9.6 6.6L10.4 4.4L8 3.6L6 2.2L4.2 3.8L2.6 3.6Z" fill="#111"/><path d="M1 4L3.4 6.8Q4.4 8.2 6 8.2Q8 8.2 9.4 6L10.2 4.2L7.8 3.2L6 1.8L4.2 3.6L2.6 3.2Z" fill="#f2f2f2"/><path d="M1 4L2.6 2.6L4 3.4L5.8 1.2L7.8 2.4L10.2 3.4L10 4.4L7.6 3.6L6 2.8L4.4 4.4L3 3.8L1.4 4.6Z" fill="#2424a8"/></svg>
<span id="t52" class="t " style="left:54.5px;top:425.6px;font-size:8px;line-height:12px;color:#f8f8f8;font-weight:400;transform:scaleX(0.9287);">Standard Volume</span>
<div class="r" style="left:22.5px;top:443.5px;width:99px;height:28px;background:#2d2d2d;"></div>
<div class="r" style="left:23.3px;top:444.5px;width:97.7px;height:26.5px;background:#4d4d4d;"></div>
<span id="t53" class="t " style="left:27px;top:443.7px;font-size:9px;line-height:13px;color:#f0f0f0;font-weight:400;">-</span>
<span id="t54" class="t " style="left:32.8px;top:444.5px;font-size:8px;line-height:12px;color:#f4f4f4;font-weight:400;transform:scaleX(0.8289);">USD</span>
<div class="r" style="left:31.5px;top:457.6px;width:89.5px;height:13px;background:#2d2d2d;"></div>
<div class="r" style="left:32px;top:458.6px;width:88.5px;height:11px;background:#444444;"></div>
<svg style="left:32px;top:458.3px" width="11" height="11" viewBox="0 0 11 11"><rect width="11" height="10.4" fill="#3a3a3a"/><path d="M1.2 4.6L3.4 7.4Q4.4 8.9 6 8.9Q8.2 8.9 9.6 6.6L10.4 4.4L8 3.6L6 2.2L4.2 3.8L2.6 3.6Z" fill="#111"/><path d="M1 4L3.4 6.8Q4.4 8.2 6 8.2Q8 8.2 9.4 6L10.2 4.2L7.8 3.2L6 1.8L4.2 3.6L2.6 3.2Z" fill="#f2f2f2"/><path d="M1 4L2.6 2.6L4 3.4L5.8 1.2L7.8 2.4L10.2 3.4L10 4.4L7.6 3.6L6 2.8L4.4 4.4L3 3.8L1.4 4.6Z" fill="#2424a8"/></svg>
<span id="t55" class="t " style="left:45.5px;top:458.7px;font-size:8px;line-height:12px;color:#f8f8f8;font-weight:400;transform:scaleX(0.8969);">Usd Preview Surface</span>
<div class="r" style="left:11px;top:473.5px;width:117.5px;height:1px;background:#2c2c2c;"></div>
<div class="r" style="left:129px;top:57px;width:2px;height:442px;background:#2c2c2c;"></div>
<div class="r" style="left:131px;top:57px;width:415px;height:442px;background:#3c3c3c;"></div>
<div class="r" style="left:131px;top:57px;width:415px;height:13.5px;background:#333333;"></div>
<div class="r" style="left:178px;top:57px;width:368px;height:12.6px;background:#3f3f3f;border:1px solid #242424;"></div>
<div class="r" style="left:132px;top:58px;width:46.5px;height:12.5px;background:#484848;border-top:1px solid #777;border-left:1px solid #666;border-right:1px solid #2a2a2a;"></div>
<span id="t56" class="t " style="left:138px;top:57.75px;font-size:8.5px;line-height:12.5px;color:#ffffff;font-weight:700;transform:scaleX(0.9665);font-style:italic;">View1</span>
<div class="r" style="left:132px;top:72px;width:413px;height:426px;background-color:#444444;background-image:linear-gradient(90deg,#4a4a4a 1px,transparent 1px),linear-gradient(#4a4a4a 1px,transparent 1px);background-size:13.22px 13.22px;background-position:2.5px 0.1px;border-top:1px solid #2e2e2e;border-left:1px solid #2e2e2e;"></div>
<div class="r" style="left:546px;top:57px;width:2px;height:442px;background:#2c2c2c;"></div>
<svg width="0" height="0" style="left:0;top:0"><defs>
<filter id="wood" x="0" y="0" width="100%" height="100%" color-interpolation-filters="sRGB"><feTurbulence type="fractalNoise" baseFrequency="0.09 0.5" numOctaves="3" seed="3" result="n"/><feColorMatrix in="n" type="matrix" values="1 0 0 0 0  1 0 0 0 0  1 0 0 0 0  0 0 0 0 1" result="g"/><feComposite in="SourceGraphic" in2="g" operator="arithmetic" k1="0" k2="1" k3="0.12" k4="-0.06"/></filter>
<filter id="metal" x="0" y="0" width="100%" height="100%" color-interpolation-filters="sRGB"><feTurbulence type="fractalNoise" baseFrequency="0.18 0.5" numOctaves="2" seed="8" result="n"/><feColorMatrix in="n" type="matrix" values="1 0 0 0 0  1 0 0 0 0  1 0 0 0 0  0 0 0 0 1" result="g"/><feComposite in="SourceGraphic" in2="g" operator="arithmetic" k1="0" k2="1" k3="0.1" k4="-0.05"/></filter>
<linearGradient id="ghd" x1="0" x2="0" y1="0" y2="1"><stop offset="0" stop-color="#44996d"/><stop offset="1" stop-color="#6dbb91"/></linearGradient>
</defs></svg>
<svg style="left:164.6px;top:88px" width="100" height="125" viewBox="0 0 100 125"><path d="M92 32H95.5Q97.8 32 97.8 34.4V90.4L94.6 93.6H92Z" fill="#4faf80" stroke="#3b8a64" stroke-width="0.8"/><path d="M0.4 110H92V119.4L88 123.2H3Q0.4 123.2 0.4 120.6Z" fill="#98a4b1" stroke="#5c6670" stroke-width="0.8"/><path d="M0.8 118.6H92" stroke="#c4ced8" stroke-width="1"/><path d="M80 118L83 115M83 118L86 115M86 118L89 115M89 118L91.5 115.5" stroke="#6e7a86" stroke-width="0.7"/><rect x="0.4" y="26.6" width="91.6" height="91.4" fill="#b9c5d2" stroke="#6f7c8a" stroke-width="0.8"/><path d="M0.4 27V3.4Q0.4 0.4 3.4 0.4H89Q92 0.4 92 3.4V27Z" fill="url(#ghd)" stroke="#33694f" stroke-width="0.8"/><path d="M1.2 26V3.8Q1.2 1.3 3.8 1.3H88.6Q91.2 1.3 91.2 3.8V26" fill="none" stroke="#86cca8" stroke-width="0.7"/><rect x="2.4" y="28.6" width="87" height="85.6" fill="#432b20"/><rect x="2.4" y="28.6" width="87" height="85.6" fill="#432b20" filter="url(#wood)"/><rect x="2.4" y="28.6" width="87" height="85.6" fill="none" stroke="#5a6470" stroke-width="0.6"/></svg>
<span id="t57" class="t " style="left:169.8px;top:90px;font-size:8px;line-height:12px;color:#000000;font-weight:700;transform:scaleX(0.7250);">マップ</span>
<span id="t58" class="t " style="left:190.2px;top:89.15px;font-size:8.5px;line-height:12.5px;color:#000000;font-weight:400;transform:scaleX(0.9294);-webkit-text-stroke:0.3px #000;">#0</span>
<span id="t59" class="t " style="left:170px;top:101.15px;font-size:8.5px;line-height:12.5px;color:#0a0a0a;font-weight:400;transform:scaleX(0.9974);">Bitmap</span>
<svg style="left:279.1px;top:85.2px" width="110" height="135" viewBox="-4 -4 110 135"><path d="M1 -3.2H91.4Q95.4 -3.2 95.4 1V25Q95.6 28.6 98 29.2Q100.8 30 100.8 33.5V92Q100.8 96.4 97 96.4H95.4V122.5Q95.4 126.3 91.4 126.3H1Q-3 126.3 -3 122.5V1Q-3 -3.2 1 -3.2Z" fill="none" stroke="#ececec" stroke-width="1.7" stroke-dasharray="4.6 2.1"/></svg>
<svg style="left:283.1px;top:89.2px" width="100" height="125" viewBox="0 0 100 125"><path d="M92 32H95.5Q97.8 32 97.8 34.4V90.4L94.6 93.6H92Z" fill="#4faf80" stroke="#3b8a64" stroke-width="0.8"/><path d="M0.4 110H92V119.4L88 123.2H3Q0.4 123.2 0.4 120.6Z" fill="#98a4b1" stroke="#5c6670" stroke-width="0.8"/><path d="M0.8 118.6H92" stroke="#c4ced8" stroke-width="1"/><path d="M80 118L83 115M83 118L86 115M86 118L89 115M89 118L91.5 115.5" stroke="#6e7a86" stroke-width="0.7"/><rect x="0.4" y="26.6" width="91.6" height="91.4" fill="#b9c5d2" stroke="#6f7c8a" stroke-width="0.8"/><path d="M0.4 27V3.4Q0.4 0.4 3.4 0.4H89Q92 0.4 92 3.4V27Z" fill="url(#ghd)" stroke="#33694f" stroke-width="0.8"/><path d="M1.2 26V3.8Q1.2 1.3 3.8 1.3H88.6Q91.2 1.3 91.2 3.8V26" fill="none" stroke="#86cca8" stroke-width="0.7"/><rect x="2.4" y="28.6" width="87" height="85.6" fill="#858585"/><rect x="2.4" y="28.6" width="87" height="85.6" fill="#858585" filter="url(#metal)"/><rect x="2.4" y="28.6" width="87" height="85.6" fill="none" stroke="#5a6470" stroke-width="0.6"/></svg>
<span id="t60" class="t " style="left:288.3px;top:91.2px;font-size:8px;line-height:12px;color:#000000;font-weight:700;transform:scaleX(0.7250);">マップ</span>
<span id="t61" class="t " style="left:308.7px;top:90.35px;font-size:8.5px;line-height:12.5px;color:#000000;font-weight:400;transform:scaleX(0.9294);-webkit-text-stroke:0.3px #000;">#3</span>
<span id="t62" class="t " style="left:288.5px;top:102.35px;font-size:8.5px;line-height:12.5px;color:#0a0a0a;font-weight:400;transform:scaleX(0.9974);">Bitmap</span>
<svg style="left:164.6px;top:220px" width="100" height="125" viewBox="0 0 100 125"><path d="M92 32H95.5Q97.8 32 97.8 34.4V90.4L94.6 93.6H92Z" fill="#4faf80" stroke="#3b8a64" stroke-width="0.8"/><path d="M0.4 110H92V119.4L88 123.2H3Q0.4 123.2 0.4 120.6Z" fill="#98a4b1" stroke="#5c6670" stroke-width="0.8"/><path d="M0.8 118.6H92" stroke="#c4ced8" stroke-width="1"/><path d="M80 118L83 115M83 118L86 115M86 118L89 115M89 118L91.5 115.5" stroke="#6e7a86" stroke-width="0.7"/><rect x="0.4" y="26.6" width="91.6" height="91.4" fill="#b9c5d2" stroke="#6f7c8a" stroke-width="0.8"/><path d="M0.4 27V3.4Q0.4 0.4 3.4 0.4H89Q92 0.4 92 3.4V27Z" fill="url(#ghd)" stroke="#33694f" stroke-width="0.8"/><path d="M1.2 26V3.8Q1.2 1.3 3.8 1.3H88.6Q91.2 1.3 91.2 3.8V26" fill="none" stroke="#86cca8" stroke-width="0.7"/><rect x="2.4" y="28.6" width="87" height="85.6" fill="#8080ff"/><rect x="2.4" y="28.6" width="87" height="85.6" fill="none" stroke="#5a6470" stroke-width="0.6"/></svg>
<span id="t63" class="t " style="left:169.8px;top:222px;font-size:8px;line-height:12px;color:#000000;font-weight:700;transform:scaleX(0.7250);">マップ</span>
<span id="t64" class="t " style="left:190.2px;top:221.15px;font-size:8.5px;line-height:12.5px;color:#000000;font-weight:400;transform:scaleX(0.9294);-webkit-text-stroke:0.3px #000;">#2</span>
<span id="t65" class="t " style="left:170px;top:233.15px;font-size:8.5px;line-height:12.5px;color:#0a0a0a;font-weight:400;transform:scaleX(0.9974);">Bitmap</span>
<svg style="left:283.1px;top:220px" width="100" height="125" viewBox="0 0 100 125"><path d="M92 32H95.5Q97.8 32 97.8 34.4V90.4L94.6 93.6H92Z" fill="#4faf80" stroke="#3b8a64" stroke-width="0.8"/><path d="M0.4 110H92V119.4L88 123.2H3Q0.4 123.2 0.4 120.6Z" fill="#98a4b1" stroke="#5c6670" stroke-width="0.8"/><path d="M0.8 118.6H92" stroke="#c4ced8" stroke-width="1"/><path d="M80 118L83 115M83 118L86 115M86 118L89 115M89 118L91.5 115.5" stroke="#6e7a86" stroke-width="0.7"/><rect x="0.4" y="26.6" width="91.6" height="91.4" fill="#b9c5d2" stroke="#6f7c8a" stroke-width="0.8"/><path d="M0.4 27V3.4Q0.4 0.4 3.4 0.4H89Q92 0.4 92 3.4V27Z" fill="url(#ghd)" stroke="#33694f" stroke-width="0.8"/><path d="M1.2 26V3.8Q1.2 1.3 3.8 1.3H88.6Q91.2 1.3 91.2 3.8V26" fill="none" stroke="#86cca8" stroke-width="0.7"/><rect x="2.4" y="28.6" width="87" height="85.6" fill="#000000"/><rect x="2.4" y="28.6" width="87" height="85.6" fill="none" stroke="#5a6470" stroke-width="0.6"/></svg>
<span id="t66" class="t " style="left:288.3px;top:222px;font-size:8px;line-height:12px;color:#000000;font-weight:700;transform:scaleX(0.7250);">マップ</span>
<span id="t67" class="t " style="left:308.7px;top:221.15px;font-size:8.5px;line-height:12.5px;color:#000000;font-weight:400;transform:scaleX(0.9294);-webkit-text-stroke:0.3px #000;">#1</span>
<span id="t68" class="t " style="left:288.5px;top:233.15px;font-size:8.5px;line-height:12.5px;color:#0a0a0a;font-weight:400;transform:scaleX(0.9974);">Bitmap</span>
<div class="r" style="left:520px;top:242px;width:7px;height:270px;background:#4d86b8;border-radius:0 3px 0 0;border:1px solid #3a6a98;"></div>
<div class="r" style="left:428px;top:113.5px;width:93px;height:420px;background:#b4bec9;border-left:1px solid #3c4450;border-right:1px solid #3c4450;"></div>
<svg style="left:428px;top:88.5px" width="93" height="26" viewBox="0 0 93 26"><defs><linearGradient id="mhb" x1="0" x2="0" y1="0" y2="1"><stop offset="0" stop-color="#4f7eaa"/><stop offset="1" stop-color="#86abcb"/></linearGradient><clipPath id="mhc"><path d="M0 26V3Q0 0 3 0H90Q93 0 93 3V26Z"/></clipPath></defs><g clip-path="url(#mhc)"><rect width="93" height="26" fill="url(#mhb)"/><path d="M0 0H54.5L35.5 26H0Z" fill="#b00000"/><rect x="2.4" y="2.8" width="20.8" height="20" fill="#a90000" stroke="#8a0000" stroke-width="0.8"/></g><path d="M0.5 26V3Q0.5 0.5 3 0.5H90Q92.5 0.5 92.5 3V26" fill="none" stroke="#6d94b8" stroke-width="1"/><path d="M0 25.5H93" stroke="#3c5878" stroke-width="1"/><path d="M7.6 9L8.4 8.7L10.6 10.6Q11.8 9.6 13.6 9.6Q16 9.6 17.2 11.2L18.4 11.6Q18.8 13.4 17.4 14.2Q16.6 16.2 14.4 16.3H12.6Q10.8 16 10.2 13.6L9.6 11.8Z" fill="#f6f6f6"/><path d="M11.4 9.7Q13.4 7.6 15.6 9.6Q13.6 9 11.4 9.7Z" fill="#1e2a9a" stroke="#1e2a9a" stroke-width="0.5"/><path d="M14 12Q16 13.4 17.6 12.2L17.4 14.2Q16.6 16.2 14.6 16.2Q15.4 14 14 12Z" fill="#8e8e8e"/><path d="M12.4 16.4H14.8" stroke="#222" stroke-width="0.6"/><path d="M80 6.5H85" stroke="#233a55" stroke-width="1.2"/></svg>
<span id="t69" class="t " style="left:453.5px;top:90.5px;font-size:8px;line-height:12px;color:#0a0a0a;font-weight:700;transform:scaleX(0.9913);">Material #2</span>
<span id="t70" class="t " style="left:455px;top:100.3px;font-size:8px;line-height:12px;color:#0a0a0a;font-weight:700;transform:scaleX(0.9408);letter-spacing:0.3px;">Standard...</span>
<div class="r" style="left:433px;top:126.9px;width:84px;height:1px;background:#8d97a3;"></div>
<div class="r" style="left:422.9px;top:116.8px;width:9.4px;height:9.4px;background:#a9b8cb;border-radius:50%;border:1px solid #8191a6;"></div>
<span id="t71" class="t " style="left:435.8px;top:116px;font-size:7.2px;line-height:11.2px;color:#161616;font-weight:400;transform:scaleX(0.9530);-webkit-text-stroke:0.25px #161616;">base</span>
<div class="r" style="left:433px;top:138.745px;width:84px;height:1px;background:#8d97a3;"></div>
<div class="r" style="left:422.9px;top:128.645px;width:9.4px;height:9.4px;background:#d8f000;border-radius:50%;border:1px solid #8fa800;"></div>
<span id="t72" class="t " style="left:435.8px;top:127.845px;font-size:7.2px;line-height:11.2px;color:#161616;font-weight:400;transform:scaleX(0.9530);-webkit-text-stroke:0.25px #161616;">base_color</span>
<div class="r" style="left:433px;top:150.59px;width:84px;height:1px;background:#8d97a3;"></div>
<div class="r" style="left:422.9px;top:140.49px;width:9.4px;height:9.4px;background:#a9b8cb;border-radius:50%;border:1px solid #8191a6;"></div>
<span id="t73" class="t " style="left:435.8px;top:139.69px;font-size:7.2px;line-height:11.2px;color:#161616;font-weight:400;transform:scaleX(0.9530);-webkit-text-stroke:0.25px #161616;">diffuse_roughness</span>
<div class="r" style="left:433px;top:162.435px;width:84px;height:1px;background:#8d97a3;"></div>
<div class="r" style="left:422.9px;top:152.335px;width:9.4px;height:9.4px;background:#a9b8cb;border-radius:50%;border:1px solid #8191a6;"></div>
<span id="t74" class="t " style="left:435.8px;top:151.535px;font-size:7.2px;line-height:11.2px;color:#161616;font-weight:400;transform:scaleX(0.9530);-webkit-text-stroke:0.25px #161616;">specular</span>
<div class="r" style="left:433px;top:174.28px;width:84px;height:1px;background:#8d97a3;"></div>
<div class="r" style="left:422.9px;top:164.18px;width:9.4px;height:9.4px;background:#a9b8cb;border-radius:50%;border:1px solid #8191a6;"></div>
<span id="t75" class="t " style="left:435.8px;top:163.38px;font-size:7.2px;line-height:11.2px;color:#161616;font-weight:400;transform:scaleX(0.9530);-webkit-text-stroke:0.25px #161616;">specular_color</span>
<div class="r" style="left:433px;top:186.125px;width:84px;height:1px;background:#8d97a3;"></div>
<div class="r" style="left:422.9px;top:176.025px;width:9.4px;height:9.4px;background:#d8f000;border-radius:50%;border:1px solid #8fa800;"></div>
<span id="t76" class="t " style="left:435.8px;top:175.225px;font-size:7.2px;line-height:11.2px;color:#161616;font-weight:400;transform:scaleX(0.9530);-webkit-text-stroke:0.25px #161616;">specular_roughness</span>
<div class="r" style="left:433px;top:197.97px;width:84px;height:1px;background:#8d97a3;"></div>
<div class="r" style="left:422.9px;top:187.87px;width:9.4px;height:9.4px;background:#a9b8cb;border-radius:50%;border:1px solid #8191a6;"></div>
<span id="t77" class="t " style="left:435.8px;top:187.07px;font-size:7.2px;line-height:11.2px;color:#161616;font-weight:400;transform:scaleX(0.9530);-webkit-text-stroke:0.25px #161616;">specular_IOR</span>
<div class="r" style="left:433px;top:209.815px;width:84px;height:1px;background:#8d97a3;"></div>
<div class="r" style="left:422.9px;top:199.715px;width:9.4px;height:9.4px;background:#a9b8cb;border-radius:50%;border:1px solid #8191a6;"></div>
<span id="t78" class="t " style="left:435.8px;top:198.915px;font-size:7.2px;line-height:11.2px;color:#161616;font-weight:400;transform:scaleX(0.9530);-webkit-text-stroke:0.25px #161616;">specular_anisotropy</span>
<div class="r" style="left:433px;top:221.66px;width:84px;height:1px;background:#8d97a3;"></div>
<div class="r" style="left:422.9px;top:211.56px;width:9.4px;height:9.4px;background:#a9b8cb;border-radius:50%;border:1px solid #8191a6;"></div>
<span id="t79" class="t " style="left:435.8px;top:210.76px;font-size:7.2px;line-height:11.2px;color:#161616;font-weight:400;transform:scaleX(0.9530);-webkit-text-stroke:0.25px #161616;">specular_rotation</span>
<div class="r" style="left:433px;top:233.505px;width:84px;height:1px;background:#8d97a3;"></div>
<div class="r" style="left:422.9px;top:223.405px;width:9.4px;height:9.4px;background:#d8f000;border-radius:50%;border:1px solid #8fa800;"></div>
<span id="t80" class="t " style="left:435.8px;top:222.605px;font-size:7.2px;line-height:11.2px;color:#161616;font-weight:400;transform:scaleX(0.9530);-webkit-text-stroke:0.25px #161616;">metalness</span>
<div class="r" style="left:433px;top:245.35px;width:84px;height:1px;background:#8d97a3;"></div>
<div class="r" style="left:422.9px;top:235.25px;width:9.4px;height:9.4px;background:#a9b8cb;border-radius:50%;border:1px solid #8191a6;"></div>
<span id="t81" class="t " style="left:435.8px;top:234.45px;font-size:7.2px;line-height:11.2px;color:#161616;font-weight:400;transform:scaleX(0.9530);-webkit-text-stroke:0.25px #161616;">transmission</span>
<div class="r" style="left:433px;top:257.195px;width:84px;height:1px;background:#8d97a3;"></div>
<div class="r" style="left:422.9px;top:247.095px;width:9.4px;height:9.4px;background:#a9b8cb;border-radius:50%;border:1px solid #8191a6;"></div>
<span id="t82" class="t " style="left:435.8px;top:246.295px;font-size:7.2px;line-height:11.2px;color:#161616;font-weight:400;transform:scaleX(0.9530);-webkit-text-stroke:0.25px #161616;">transmission_color</span>
<div class="r" style="left:433px;top:269.04px;width:84px;height:1px;background:#8d97a3;"></div>
<div class="r" style="left:422.9px;top:258.94px;width:9.4px;height:9.4px;background:#a9b8cb;border-radius:50%;border:1px solid #8191a6;"></div>
<span id="t83" class="t " style="left:435.8px;top:258.14px;font-size:7.2px;line-height:11.2px;color:#161616;font-weight:400;transform:scaleX(0.9530);-webkit-text-stroke:0.25px #161616;">transmission_depth</span>
<div class="r" style="left:433px;top:280.885px;width:84px;height:1px;background:#8d97a3;"></div>
<div class="r" style="left:422.9px;top:270.785px;width:9.4px;height:9.4px;background:#a9b8cb;border-radius:50%;border:1px solid #8191a6;"></div>
<span id="t84" class="t " style="left:435.8px;top:269.985px;font-size:7.2px;line-height:11.2px;color:#161616;font-weight:400;transform:scaleX(0.9530);-webkit-text-stroke:0.25px #161616;">transmission_scatter</span>
<div class="r" style="left:433px;top:292.73px;width:84px;height:1px;background:#8d97a3;"></div>
<div class="r" style="left:422.9px;top:282.63px;width:9.4px;height:9.4px;background:#a9b8cb;border-radius:50%;border:1px solid #8191a6;"></div>
<span id="t85" class="t " style="left:435.8px;top:281.83px;font-size:7.2px;line-height:11.2px;color:#161616;font-weight:400;transform:scaleX(0.9050);-webkit-text-stroke:0.25px #161616;">transmission_scatter_ani...</span>
<div class="r" style="left:433px;top:304.575px;width:84px;height:1px;background:#8d97a3;"></div>
<div class="r" style="left:422.9px;top:294.475px;width:9.4px;height:9.4px;background:#a9b8cb;border-radius:50%;border:1px solid #8191a6;"></div>
<span id="t86" class="t " style="left:435.8px;top:293.675px;font-size:7.2px;line-height:11.2px;color:#161616;font-weight:400;transform:scaleX(0.9530);-webkit-text-stroke:0.25px #161616;">transmission_dispersion*</span>
<div class="r" style="left:433px;top:316.42px;width:84px;height:1px;background:#8d97a3;"></div>
<div class="r" style="left:422.9px;top:306.32px;width:9.4px;height:9.4px;background:#a9b8cb;border-radius:50%;border:1px solid #8191a6;"></div>
<span id="t87" class="t " style="left:435.8px;top:305.52px;font-size:7.2px;line-height:11.2px;color:#161616;font-weight:400;transform:scaleX(0.9050);-webkit-text-stroke:0.25px #161616;">transmission_extra_roug...</span>
<div class="r" style="left:433px;top:328.265px;width:84px;height:1px;background:#8d97a3;"></div>
<div class="r" style="left:422.9px;top:318.165px;width:9.4px;height:9.4px;background:#a9b8cb;border-radius:50%;border:1px solid #8191a6;"></div>
<span id="t88" class="t " style="left:435.8px;top:317.365px;font-size:7.2px;line-height:11.2px;color:#161616;font-weight:400;transform:scaleX(0.9530);-webkit-text-stroke:0.25px #161616;">subsurface</span>
<div class="r" style="left:433px;top:340.11px;width:84px;height:1px;background:#8d97a3;"></div>
<div class="r" style="left:422.9px;top:330.01px;width:9.4px;height:9.4px;background:#a9b8cb;border-radius:50%;border:1px solid #8191a6;"></div>
<span id="t89" class="t " style="left:435.8px;top:329.21px;font-size:7.2px;line-height:11.2px;color:#161616;font-weight:400;transform:scaleX(0.9530);-webkit-text-stroke:0.25px #161616;">subsurface_color</span>
<div class="r" style="left:433px;top:351.955px;width:84px;height:1px;background:#8d97a3;"></div>
<div class="r" style="left:422.9px;top:341.855px;width:9.4px;height:9.4px;background:#a9b8cb;border-radius:50%;border:1px solid #8191a6;"></div>
<span id="t90" class="t " style="left:435.8px;top:341.055px;font-size:7.2px;line-height:11.2px;color:#161616;font-weight:400;transform:scaleX(0.9530);-webkit-text-stroke:0.25px #161616;">subsurface_radius</span>
<div class="r" style="left:433px;top:363.8px;width:84px;height:1px;background:#8d97a3;"></div>
<div class="r" style="left:422.9px;top:353.7px;width:9.4px;height:9.4px;background:#a9b8cb;border-radius:50%;border:1px solid #8191a6;"></div>
<span id="t91" class="t " style="left:435.8px;top:352.9px;font-size:7.2px;line-height:11.2px;color:#161616;font-weight:400;transform:scaleX(0.9530);-webkit-text-stroke:0.25px #161616;">subsurface_scale</span>
<div class="r" style="left:433px;top:375.645px;width:84px;height:1px;background:#8d97a3;"></div>
<div class="r" style="left:422.9px;top:365.545px;width:9.4px;height:9.4px;background:#a9b8cb;border-radius:50%;border:1px solid #8191a6;"></div>
<span id="t92" class="t " style="left:435.8px;top:364.745px;font-size:7.2px;line-height:11.2px;color:#161616;font-weight:400;transform:scaleX(0.9530);-webkit-text-stroke:0.25px #161616;">subsurface_anisotropy</span>
<div class="r" style="left:433px;top:387.49px;width:84px;height:1px;background:#8d97a3;"></div>
<div class="r" style="left:422.9px;top:377.39px;width:9.4px;height:9.4px;background:#a9b8cb;border-radius:50%;border:1px solid #8191a6;"></div>
<span id="t93" class="t " style="left:435.8px;top:376.59px;font-size:7.2px;line-height:11.2px;color:#161616;font-weight:400;transform:scaleX(0.9530);-webkit-text-stroke:0.25px #161616;">sheen</span>
<div class="r" style="left:433px;top:399.335px;width:84px;height:1px;background:#8d97a3;"></div>
<div class="r" style="left:422.9px;top:389.235px;width:9.4px;height:9.4px;background:#a9b8cb;border-radius:50%;border:1px solid #8191a6;"></div>
<span id="t94" class="t " style="left:435.8px;top:388.435px;font-size:7.2px;line-height:11.2px;color:#161616;font-weight:400;transform:scaleX(0.9530);-webkit-text-stroke:0.25px #161616;">sheen_color</span>
<div class="r" style="left:433px;top:411.18px;width:84px;height:1px;background:#8d97a3;"></div>
<div class="r" style="left:422.9px;top:401.08px;width:9.4px;height:9.4px;background:#a9b8cb;border-radius:50%;border:1px solid #8191a6;"></div>
<span id="t95" class="t " style="left:435.8px;top:400.28px;font-size:7.2px;line-height:11.2px;color:#161616;font-weight:400;transform:scaleX(0.9530);-webkit-text-stroke:0.25px #161616;">sheen_roughness</span>
<div class="r" style="left:433px;top:423.025px;width:84px;height:1px;background:#8d97a3;"></div>
<div class="r" style="left:422.9px;top:412.925px;width:9.4px;height:9.4px;background:#d8f000;border-radius:50%;border:1px solid #8fa800;"></div>
<span id="t96" class="t " style="left:435.8px;top:412.125px;font-size:7.2px;line-height:11.2px;color:#161616;font-weight:400;transform:scaleX(0.9530);-webkit-text-stroke:0.25px #161616;">normal</span>
<div class="r" style="left:433px;top:434.87px;width:84px;height:1px;background:#8d97a3;"></div>
<div class="r" style="left:422.9px;top:424.77px;width:9.4px;height:9.4px;background:#a9b8cb;border-radius:50%;border:1px solid #8191a6;"></div>
<span id="t97" class="t " style="left:435.8px;top:423.97px;font-size:7.2px;line-height:11.2px;color:#161616;font-weight:400;transform:scaleX(0.9530);-webkit-text-stroke:0.25px #161616;">tangent</span>
<div class="r" style="left:433px;top:446.715px;width:84px;height:1px;background:#8d97a3;"></div>
<div class="r" style="left:422.9px;top:436.615px;width:9.4px;height:9.4px;background:#a9b8cb;border-radius:50%;border:1px solid #8191a6;"></div>
<span id="t98" class="t " style="left:435.8px;top:435.815px;font-size:7.2px;line-height:11.2px;color:#161616;font-weight:400;transform:scaleX(0.9530);-webkit-text-stroke:0.25px #161616;">coat</span>
<div class="r" style="left:433px;top:458.56px;width:84px;height:1px;background:#8d97a3;"></div>
<div class="r" style="left:422.9px;top:448.46px;width:9.4px;height:9.4px;background:#a9b8cb;border-radius:50%;border:1px solid #8191a6;"></div>
<span id="t99" class="t " style="left:435.8px;top:447.66px;font-size:7.2px;line-height:11.2px;color:#161616;font-weight:400;transform:scaleX(0.9530);-webkit-text-stroke:0.25px #161616;">coat_color</span>
<div class="r" style="left:433px;top:470.405px;width:84px;height:1px;background:#8d97a3;"></div>
<div class="r" style="left:422.9px;top:460.305px;width:9.4px;height:9.4px;background:#a9b8cb;border-radius:50%;border:1px solid #8191a6;"></div>
<span id="t100" class="t " style="left:435.8px;top:459.505px;font-size:7.2px;line-height:11.2px;color:#161616;font-weight:400;transform:scaleX(0.9530);-webkit-text-stroke:0.25px #161616;">coat_roughness</span>
<div class="r" style="left:433px;top:482.25px;width:84px;height:1px;background:#8d97a3;"></div>
<div class="r" style="left:422.9px;top:472.15px;width:9.4px;height:9.4px;background:#a9b8cb;border-radius:50%;border:1px solid #8191a6;"></div>
<span id="t101" class="t " style="left:435.8px;top:471.35px;font-size:7.2px;line-height:11.2px;color:#161616;font-weight:400;transform:scaleX(0.9530);-webkit-text-stroke:0.25px #161616;">coat_IOR</span>
<div class="r" style="left:433px;top:494.095px;width:84px;height:1px;background:#8d97a3;"></div>
<div class="r" style="left:422.9px;top:483.995px;width:9.4px;height:9.4px;background:#a9b8cb;border-radius:50%;border:1px solid #8191a6;"></div>
<span id="t102" class="t " style="left:435.8px;top:483.195px;font-size:7.2px;line-height:11.2px;color:#161616;font-weight:400;transform:scaleX(0.9530);-webkit-text-stroke:0.25px #161616;">coat_anisotropy</span>
<div class="r" style="left:433px;top:505.94px;width:84px;height:1px;background:#8d97a3;"></div>
<div class="r" style="left:422.9px;top:495.84px;width:9.4px;height:9.4px;background:#a9b8cb;border-radius:50%;border:1px solid #8191a6;"></div>
<span id="t103" class="t " style="left:435.8px;top:495.04px;font-size:7.2px;line-height:11.2px;color:#161616;font-weight:400;transform:scaleX(0.9530);-webkit-text-stroke:0.25px #161616;">coat_rotation</span>
<div class="r" style="left:522.3px;top:391.2px;width:9.4px;height:9.4px;background:#a9b8cb;border-radius:50%;border:1px solid #8191a6;"></div>
<svg style="left:0;top:0" width="800" height="523" viewBox="0 0 800 523">
<g fill="none" stroke="#e43030" stroke-width="1.4">
<path d="M263 150.5C320 150.5 370 133.5 424 133.5"/>
<path d="M382 151C405 151 400 181 424 181"/>
<path d="M382 281.7C405 281.7 400 228 424 228"/>
<path d="M263 281.7C330 281.7 350 417.5 424 417.5"/>
</g>
<g fill="#d8f000" stroke="#7f9a00" stroke-width="0.7">
<circle cx="263" cy="150.3" r="3.6"/><circle cx="381.8" cy="151" r="3.6"/><circle cx="263" cy="281.5" r="3.6"/><circle cx="381.8" cy="281.7" r="3.6"/>
</g></svg>
<div class="r" style="left:135px;top:478px;width:18px;height:18px;background:#4b4b4b;border:1px solid #565656;border-radius:3px;"></div>
<svg style="left:138px;top:481px" width="12" height="12" viewBox="0 0 12 12"><path d="M1 11V6L2.5 1.5H4.5L5.5 6V11ZM6.5 11V6L7.5 1.5H9.5L11 6V11Z" fill="#dcdcdc"/><rect x="5" y="4" width="2" height="3" fill="#bdbdbd"/></svg>
<div class="r" style="left:548px;top:57px;width:242px;height:442px;background:#3b3b3b;"></div>
<div class="r" style="left:548.6px;top:57px;width:238.9px;height:12px;background:linear-gradient(#5a5a5a,#3e3e3e 45%,#2b2b2b);border-top:1px solid #727272;border-left:1px solid #606060;"></div>
<span id="t104" class="t " style="left:553.2px;top:56.75px;font-size:8.5px;line-height:12.5px;color:#ffffff;font-weight:700;transform:scaleX(0.7449);text-shadow:0.6px 0.6px 0 #000;">ナビゲーター</span>
<div class="r" style="left:778.5px;top:60px;width:6.5px;height:7.5px;background:#3c3c3c;border-radius:1px;"></div>
<span id="t105" class="t " style="left:779.7px;top:57.45px;font-size:7.5px;line-height:11.5px;color:#000000;font-weight:700;">x</span>
<div class="r" style="left:548.5px;top:69.5px;width:238.5px;height:65px;background:#444444;border:1px solid #2e2e2e;"></div>
<svg style="left:640px;top:70px" width="60" height="64" viewBox="640 70 60 64">
<g fill="#4db07c"><rect x="652.2" y="75.8" width="9.6" height="10.6"/><rect x="662.6" y="75.8" width="9.6" height="10.6"/><rect x="652.2" y="87.2" width="9.6" height="10.8"/><rect x="662.6" y="87.2" width="9.6" height="10.8"/></g>
<path d="M660.8 74V86M672.8 74V89" stroke="#dddddd" stroke-width="0.8" stroke-dasharray="1 1"/>
<rect x="675" y="76" width="10.2" height="52.5" fill="#4d86b8"/>
<path d="M675 76H685.2L675 128.5Z" fill="#b80000"/>
<rect x="649.8" y="73.8" width="35.6" height="37" fill="none" stroke="#d01818" stroke-width="0.9"/>
</svg>
<div class="r" style="left:548.6px;top:139px;width:238.9px;height:12px;background:linear-gradient(#5a5a5a,#3e3e3e 45%,#2b2b2b);border-top:1px solid #727272;border-left:1px solid #606060;"></div>
<span id="t106" class="t " style="left:553.2px;top:138.75px;font-size:8.5px;line-height:12.5px;color:#ffffff;font-weight:700;transform:scaleX(0.9002);text-shadow:0.6px 0.6px 0 #000;">マップ #3 ( Bitmap )</span>
<div class="r" style="left:778.5px;top:142px;width:6.5px;height:7.5px;background:#3c3c3c;border-radius:1px;"></div>
<span id="t107" class="t " style="left:779.7px;top:139.45px;font-size:7.5px;line-height:11.5px;color:#000000;font-weight:700;">x</span>
<div class="r" style="left:548.5px;top:151.5px;width:238.5px;height:347px;background:#444444;"></div>
<div class="r" style="left:552px;top:154.8px;width:232px;height:11px;background:#666666;"></div>
<span id="t108" class="t " style="left:554px;top:154.2px;font-size:8px;line-height:12px;color:#d4d4d4;font-weight:400;transform:scaleX(0.7687);">マップ #3</span>
<div class="r" style="left:783.5px;top:169px;width:4px;height:330px;background:#3a3a3a;"></div>
<div class="r" style="left:783.8px;top:169.5px;width:3.4px;height:329px;background:#5c5c5c;"></div>
<div class="r" style="left:550.5px;top:170.5px;width:231.5px;height:126px;background:#4f4f4f;border:1px solid #3a3a3a;"></div>
<svg style="left:554.4px;top:175.1px" width="4" height="3.2" viewBox="0 0 5 4"><path d="M0.3 0.3H4.7L2.5 3.7Z" fill="#d0d0d0"/></svg>
<span id="t109" class="t " style="left:563px;top:171.5px;font-size:8px;line-height:12px;color:#ffffff;font-weight:700;transform:scaleX(0.9375);">座標</span>
<div class="r" style="left:773.5px;top:174.5px;width:3.5px;height:3.5px;background:#6a6a6a;"></div>
<div class="r" style="left:562.8px;top:190.6px;width:8.8px;height:8.8px;background:#6c6c6c;border-radius:50%;"></div>
<div class="r" style="left:564.6px;top:192.4px;width:5.2px;height:5.2px;background:#ececec;border-radius:50%;"></div>
<span id="t110" class="t " style="left:574px;top:189.1px;font-size:8px;line-height:12px;color:#f0f0f0;font-weight:400;transform:scaleX(0.6803);">テクスチャ</span>
<div class="r" style="left:609.6px;top:190.6px;width:8.8px;height:8.8px;background:#6c6c6c;border-radius:50%;"></div>
<span id="t111" class="t " style="left:621px;top:189.1px;font-size:8px;line-height:12px;color:#f0f0f0;font-weight:400;transform:scaleX(0.9375);">環境</span>
<span id="t112" class="t " style="left:639px;top:189.1px;font-size:8px;line-height:12px;color:#f0f0f0;font-weight:400;transform:scaleX(0.6630);">マッピング:</span>
<div class="r" style="left:677px;top:188.5px;width:91px;height:12px;background:#656565;"></div>
<span id="t113" class="t " style="left:680px;top:189.3px;font-size:8px;line-height:12px;color:#f0f0f0;font-weight:400;transform:scaleX(0.7303);">明示的マップ チャネル</span>
<svg style="left:759.5px;top:192.5px" width="5" height="4" viewBox="0 0 5 4"><path d="M0.2 0.3H4.8L2.5 3.8Z" fill="#f0f0f0"/></svg>
<div class="r" style="left:563.4px;top:205.8px;width:7.4px;height:7.4px;background:#5c5c5c;"></div>
<svg style="left:563.4px;top:205.8px" width="7" height="7" viewBox="0 0 7 7"><path d="M1.3 3.6L2.9 5.2L5.8 1.6" fill="none" stroke="#9a9a9a" stroke-width="1.2"/></svg>
<span id="t114" class="t " style="left:574.3px;top:204.4px;font-size:8px;line-height:12px;color:#8a8a8a;font-weight:400;transform:scaleX(0.7500);">マップを背面に表示</span>
<span id="t115" class="t " style="left:683.7px;top:205.3px;font-size:8px;line-height:12px;color:#f0f0f0;font-weight:400;transform:scaleX(0.6957);">マップ チャネル:</span>
<div class="r" style="left:730px;top:206px;width:38px;height:9px;background:#656565;"></div>
<span id="t116" class="t " style="left:732.2px;top:204.7px;font-size:8px;line-height:12px;color:#efefef;font-weight:400;">1</span>
<svg style="left:761.8px;top:207px" width="4" height="7" viewBox="0 0 4 7"><path d="M0.2 2.7L2 0.5L3.8 2.7ZM0.2 4.3L2 6.5L3.8 4.3Z" fill="#f0f0f0"/></svg>
<div class="r" style="left:563.4px;top:217.4px;width:7.4px;height:7.4px;background:#696969;"></div>
<span id="t117" class="t " style="left:574px;top:215.6px;font-size:8px;line-height:12px;color:#f0f0f0;font-weight:400;transform:scaleX(0.7277);">リアル-ワールド スケールを使用</span>
<span id="t118" class="t " style="left:594.4px;top:226.35px;font-size:7.5px;line-height:11.5px;color:#f0f0f0;font-weight:700;transform:scaleX(0.6667);">オフセット</span>
<span id="t119" class="t " style="left:638.4px;top:226.35px;font-size:7.5px;line-height:11.5px;color:#f0f0f0;font-weight:700;transform:scaleX(0.6667);">タイリング</span>
<span id="t120" class="t " style="left:675.7px;top:226.35px;font-size:7.5px;line-height:11.5px;color:#f0f0f0;font-weight:700;transform:scaleX(0.7111);">ミラー</span>
<span id="t121" class="t " style="left:701px;top:226.35px;font-size:7.5px;line-height:11.5px;color:#f0f0f0;font-weight:700;transform:scaleX(0.7556);">タイル</span>
<span id="t122" class="t " style="left:735.6px;top:226.35px;font-size:7.5px;line-height:11.5px;color:#f0f0f0;font-weight:700;transform:scaleX(0.9333);">角度</span>
<span id="t123" class="t " style="left:582.5px;top:235.5px;font-size:8px;line-height:12px;color:#f0f0f0;font-weight:400;">U:</span>
<div class="r" style="left:592px;top:237px;width:38.5px;height:9px;background:#656565;"></div>
<span id="t124" class="t " style="left:594.2px;top:235.7px;font-size:8px;line-height:12px;color:#efefef;font-weight:400;">0.0</span>
<svg style="left:624.3px;top:238px" width="4" height="7" viewBox="0 0 4 7"><path d="M0.2 2.7L2 0.5L3.8 2.7ZM0.2 4.3L2 6.5L3.8 4.3Z" fill="#f0f0f0"/></svg>
<div class="r" style="left:638px;top:237px;width:38.5px;height:9px;background:#656565;"></div>
<span id="t125" class="t " style="left:640.2px;top:235.7px;font-size:8px;line-height:12px;color:#efefef;font-weight:400;">1.0</span>
<svg style="left:670.3px;top:238px" width="4" height="7" viewBox="0 0 4 7"><path d="M0.2 2.7L2 0.5L3.8 2.7ZM0.2 4.3L2 6.5L3.8 4.3Z" fill="#f0f0f0"/></svg>
<div class="r" style="left:686.3px;top:238px;width:7.4px;height:7.4px;background:#696969;"></div>
<div class="r" style="left:702px;top:238px;width:7.4px;height:7.4px;background:#696969;"></div>
<svg style="left:702px;top:238px" width="7" height="7" viewBox="0 0 7 7"><path d="M1.3 3.6L2.9 5.2L5.8 1.6" fill="none" stroke="#f4f4f4" stroke-width="1.2"/></svg>
<span id="t126" class="t " style="left:717.5px;top:235.5px;font-size:8px;line-height:12px;color:#f0f0f0;font-weight:400;">U:</span>
<div class="r" style="left:729px;top:237px;width:39px;height:9px;background:#656565;"></div>
<span id="t127" class="t " style="left:731.2px;top:235.7px;font-size:8px;line-height:12px;color:#efefef;font-weight:400;">0.0</span>
<svg style="left:761.8px;top:238px" width="4" height="7" viewBox="0 0 4 7"><path d="M0.2 2.7L2 0.5L3.8 2.7ZM0.2 4.3L2 6.5L3.8 4.3Z" fill="#f0f0f0"/></svg>
<span id="t128" class="t " style="left:582.5px;top:248.9px;font-size:8px;line-height:12px;color:#f0f0f0;font-weight:400;">V:</span>
<div class="r" style="left:592px;top:250.4px;width:38.5px;height:9px;background:#656565;"></div>
<span id="t129" class="t " style="left:594.2px;top:249.1px;font-size:8px;line-height:12px;color:#efefef;font-weight:400;">0.0</span>
<svg style="left:624.3px;top:251.4px" width="4" height="7" viewBox="0 0 4 7"><path d="M0.2 2.7L2 0.5L3.8 2.7ZM0.2 4.3L2 6.5L3.8 4.3Z" fill="#f0f0f0"/></svg>
<div class="r" style="left:638px;top:250.4px;width:38.5px;height:9px;background:#656565;"></div>
<span id="t130" class="t " style="left:640.2px;top:249.1px;font-size:8px;line-height:12px;color:#efefef;font-weight:400;">1.0</span>
<svg style="left:670.3px;top:251.4px" width="4" height="7" viewBox="0 0 4 7"><path d="M0.2 2.7L2 0.5L3.8 2.7ZM0.2 4.3L2 6.5L3.8 4.3Z" fill="#f0f0f0"/></svg>
<div class="r" style="left:686.3px;top:251.4px;width:7.4px;height:7.4px;background:#696969;"></div>
<div class="r" style="left:702px;top:251.4px;width:7.4px;height:7.4px;background:#696969;"></div>
<svg style="left:702px;top:251.4px" width="7" height="7" viewBox="0 0 7 7"><path d="M1.3 3.6L2.9 5.2L5.8 1.6" fill="none" stroke="#f4f4f4" stroke-width="1.2"/></svg>
<span id="t131" class="t " style="left:717.5px;top:248.9px;font-size:8px;line-height:12px;color:#f0f0f0;font-weight:400;">V:</span>
<div class="r" style="left:729px;top:250.4px;width:39px;height:9px;background:#656565;"></div>
<span id="t132" class="t " style="left:731.2px;top:249.1px;font-size:8px;line-height:12px;color:#efefef;font-weight:400;">0.0</span>
<svg style="left:761.8px;top:251.4px" width="4" height="7" viewBox="0 0 4 7"><path d="M0.2 2.7L2 0.5L3.8 2.7ZM0.2 4.3L2 6.5L3.8 4.3Z" fill="#f0f0f0"/></svg>
<span id="t133" class="t " style="left:714.5px;top:260.7px;font-size:8px;line-height:12px;color:#f0f0f0;font-weight:400;">W :</span>
<div class="r" style="left:729px;top:262.2px;width:39px;height:9px;background:#656565;"></div>
<span id="t134" class="t " style="left:731.2px;top:260.9px;font-size:8px;line-height:12px;color:#efefef;font-weight:400;">0.0</span>
<svg style="left:761.8px;top:263.2px" width="4" height="7" viewBox="0 0 4 7"><path d="M0.2 2.7L2 0.5L3.8 2.7ZM0.2 4.3L2 6.5L3.8 4.3Z" fill="#f0f0f0"/></svg>
<div class="r" style="left:569.9px;top:266.4px;width:8.8px;height:8.8px;background:#6c6c6c;border-radius:50%;"></div>
<div class="r" style="left:571.7px;top:268.2px;width:5.2px;height:5.2px;background:#ececec;border-radius:50%;"></div>
<span id="t135" class="t " style="left:581px;top:265px;font-size:8px;line-height:12px;color:#f0f0f0;font-weight:400;transform:scaleX(0.8600);">UV</span>
<div class="r" style="left:598px;top:266.4px;width:8.8px;height:8.8px;background:#6c6c6c;border-radius:50%;"></div>
<span id="t136" class="t " style="left:609.7px;top:265px;font-size:8px;line-height:12px;color:#f0f0f0;font-weight:400;transform:scaleX(0.8600);">VW</span>
<div class="r" style="left:627.3px;top:266.4px;width:8.8px;height:8.8px;background:#6c6c6c;border-radius:50%;"></div>
<span id="t137" class="t " style="left:639px;top:265px;font-size:8px;line-height:12px;color:#f0f0f0;font-weight:400;transform:scaleX(0.8600);">WU</span>
<span id="t138" class="t " style="left:561px;top:280.1px;font-size:8px;line-height:12px;color:#f0f0f0;font-weight:400;transform:scaleX(0.7624);">ブラー:</span>
<div class="r" style="left:586px;top:280.8px;width:38px;height:9px;background:#656565;"></div>
<span id="t139" class="t " style="left:588.2px;top:279.5px;font-size:8px;line-height:12px;color:#efefef;font-weight:400;">1.0</span>
<svg style="left:617.8px;top:281.8px" width="4" height="7" viewBox="0 0 4 7"><path d="M0.2 2.7L2 0.5L3.8 2.7ZM0.2 4.3L2 6.5L3.8 4.3Z" fill="#f0f0f0"/></svg>
<span id="t140" class="t " style="left:628.5px;top:280.1px;font-size:8px;line-height:12px;color:#f0f0f0;font-weight:400;transform:scaleX(0.6720);">ブラー オフセット:</span>
<div class="r" style="left:690.7px;top:280.8px;width:38.5px;height:9px;background:#656565;"></div>
<span id="t141" class="t " style="left:692.9px;top:279.5px;font-size:8px;line-height:12px;color:#efefef;font-weight:400;">0.0</span>
<svg style="left:723px;top:281.8px" width="4" height="7" viewBox="0 0 4 7"><path d="M0.2 2.7L2 0.5L3.8 2.7ZM0.2 4.3L2 6.5L3.8 4.3Z" fill="#f0f0f0"/></svg>
<div class="r" style="left:734.7px;top:280px;width:37.5px;height:11px;background:#646464;border-radius:1.5px;"></div>
<span id="t142" class="t " style="left:746.45px;top:280.3px;font-size:8px;line-height:12px;color:#f0f0f0;font-weight:400;transform:scaleX(0.8750);">回転</span>
<div class="r" style="left:550.5px;top:303px;width:231.5px;height:65px;background:#4f4f4f;border:1px solid #3a3a3a;"></div>
<svg style="left:554.4px;top:307.6px" width="4" height="3.2" viewBox="0 0 5 4"><path d="M0.3 0.3H4.7L2.5 3.7Z" fill="#d0d0d0"/></svg>
<span id="t143" class="t " style="left:563px;top:304px;font-size:8px;line-height:12px;color:#ffffff;font-weight:700;transform:scaleX(0.7153);">ノイズ</span>
<div class="r" style="left:773.5px;top:307px;width:3.5px;height:3.5px;background:#6a6a6a;"></div>
<div class="r" style="left:569.2px;top:324.4px;width:7.4px;height:7.4px;background:#696969;"></div>
<span id="t144" class="t " style="left:579.5px;top:323.1px;font-size:8px;line-height:12px;color:#f0f0f0;font-weight:400;transform:scaleX(0.6875);">オン</span>
<span id="t145" class="t " style="left:615.8px;top:322.1px;font-size:8px;line-height:12px;color:#f0f0f0;font-weight:400;transform:scaleX(0.9636);">量 :</span>
<div class="r" style="left:630.4px;top:323px;width:37.5px;height:9px;background:#656565;"></div>
<span id="t146" class="t " style="left:632.6px;top:321.7px;font-size:8px;line-height:12px;color:#efefef;font-weight:400;">1.0</span>
<svg style="left:661.7px;top:324px" width="4" height="7" viewBox="0 0 4 7"><path d="M0.2 2.7L2 0.5L3.8 2.7ZM0.2 4.3L2 6.5L3.8 4.3Z" fill="#f0f0f0"/></svg>
<span id="t147" class="t " style="left:605.6px;top:336px;font-size:8px;line-height:12px;color:#f0f0f0;font-weight:400;transform:scaleX(0.7732);">レベル :</span>
<div class="r" style="left:630.4px;top:337px;width:37.5px;height:9px;background:#656565;"></div>
<span id="t148" class="t " style="left:632.6px;top:335.7px;font-size:8px;line-height:12px;color:#efefef;font-weight:400;">1</span>
<svg style="left:661.7px;top:338px" width="4" height="7" viewBox="0 0 4 7"><path d="M0.2 2.7L2 0.5L3.8 2.7ZM0.2 4.3L2 6.5L3.8 4.3Z" fill="#f0f0f0"/></svg>
<span id="t149" class="t " style="left:605.6px;top:349.8px;font-size:8px;line-height:12px;color:#f0f0f0;font-weight:400;transform:scaleX(0.7796);">サイズ :</span>
<div class="r" style="left:630.4px;top:350.8px;width:37.5px;height:9px;background:#656565;"></div>
<span id="t150" class="t " style="left:632.6px;top:349.5px;font-size:8px;line-height:12px;color:#efefef;font-weight:400;">1.0</span>
<svg style="left:661.7px;top:351.8px" width="4" height="7" viewBox="0 0 4 7"><path d="M0.2 2.7L2 0.5L3.8 2.7ZM0.2 4.3L2 6.5L3.8 4.3Z" fill="#f0f0f0"/></svg>
<div class="r" style="left:702px;top:324.6px;width:7.4px;height:7.4px;background:#696969;"></div>
<span id="t151" class="t " style="left:713px;top:323.3px;font-size:8px;line-height:12px;color:#f0f0f0;font-weight:400;transform:scaleX(0.6998);">アニメート :</span>
<span id="t152" class="t " style="left:695.8px;top:336.3px;font-size:8px;line-height:12px;color:#f0f0f0;font-weight:400;transform:scaleX(0.9290);">位相 :</span>
<div class="r" style="left:718.7px;top:337px;width:37.5px;height:9px;background:#656565;"></div>
<span id="t153" class="t " style="left:720.9px;top:335.7px;font-size:8px;line-height:12px;color:#efefef;font-weight:400;">0.0</span>
<svg style="left:750px;top:338px" width="4" height="7" viewBox="0 0 4 7"><path d="M0.2 2.7L2 0.5L3.8 2.7ZM0.2 4.3L2 6.5L3.8 4.3Z" fill="#f0f0f0"/></svg>
<div class="r" style="left:550.5px;top:371px;width:231.5px;height:128px;background:#4f4f4f;border:1px solid #3a3a3a;"></div>
<svg style="left:554.4px;top:375.6px" width="4" height="3.2" viewBox="0 0 5 4"><path d="M0.3 0.3H4.7L2.5 3.7Z" fill="#d0d0d0"/></svg>
<span id="t154" class="t " style="left:563px;top:372px;font-size:8px;line-height:12px;color:#ffffff;font-weight:700;transform:scaleX(0.7223);">ビットマップ パラメータ</span>
<div class="r" style="left:773.5px;top:375px;width:3.5px;height:3.5px;background:#6a6a6a;"></div>
<span id="t155" class="t " style="left:572px;top:391.3px;font-size:8px;line-height:12px;color:#f0f0f0;font-weight:400;transform:scaleX(0.6569);">ビットマップ:</span>
<div class="r" style="left:609.7px;top:390px;width:160.7px;height:12.5px;background:#646464;border-radius:1.5px;"></div>
<span id="t156" class="t " style="left:611px;top:390.5px;font-size:7.6px;line-height:11.6px;color:#ececec;font-weight:400;transform:scaleX(0.9598);">...kflow\Paint-01\DefaultMaterial_Roughness.png</span>
<div class="r" style="left:564px;top:408px;width:40px;height:10.5px;background:#646464;border-radius:1.5px;"></div>
<span id="t157" class="t " style="left:572px;top:408.05px;font-size:8px;line-height:12px;color:#f0f0f0;font-weight:400;transform:scaleX(0.7500);">再ロード</span>
<div class="r" style="left:648.6px;top:411.6px;width:122px;height:85px;background:transparent;border:1px solid #3a3a3a;border-radius:2px;"></div>
<div class="r" style="left:650.5px;top:409px;width:42px;height:6px;background:#4f4f4f;"></div>
<span id="t158" class="t " style="left:651.8px;top:406.4px;font-size:8px;line-height:12px;color:#f0f0f0;font-weight:700;transform:scaleX(0.7764);">クロップ/配置</span>
<div class="r" style="left:662px;top:425.8px;width:7.4px;height:7.4px;background:#696969;"></div>
<span id="t159" class="t " style="left:672.5px;top:424.3px;font-size:8px;line-height:12px;color:#f0f0f0;font-weight:400;transform:scaleX(0.8750);">適用</span>
<div class="r" style="left:700.6px;top:423px;width:58.5px;height:11px;background:#646464;border-radius:1.5px;"></div>
<span id="t160" class="t " style="left:709.35px;top:423.3px;font-size:8px;line-height:12px;color:#f0f0f0;font-weight:400;transform:scaleX(0.7342);">イメージを表示</span>
<div class="r" style="left:662.4px;top:439.4px;width:8.8px;height:8.8px;background:#6c6c6c;border-radius:50%;"></div>
<div class="r" style="left:664.2px;top:441.2px;width:5.2px;height:5.2px;background:#ececec;border-radius:50%;"></div>
<span id="t161" class="t " style="left:674px;top:438.8px;font-size:8px;line-height:12px;color:#f0f0f0;font-weight:400;transform:scaleX(0.6250);">クロップ</span>
<div class="r" style="left:707.3px;top:439.4px;width:8.8px;height:8.8px;background:#6c6c6c;border-radius:50%;"></div>
<span id="t162" class="t " style="left:718.7px;top:438.8px;font-size:8px;line-height:12px;color:#f0f0f0;font-weight:400;transform:scaleX(0.8750);">配置</span>
<span id="t163" class="t " style="left:656px;top:452.8px;font-size:8px;line-height:12px;color:#f0f0f0;font-weight:400;">U:</span>
<div class="r" style="left:673px;top:454.3px;width:34.5px;height:9px;background:#656565;"></div>
<span id="t164" class="t " style="left:675.2px;top:453px;font-size:8px;line-height:12px;color:#efefef;font-weight:400;">0.0</span>
<svg style="left:701.3px;top:455.3px" width="4" height="7" viewBox="0 0 4 7"><path d="M0.2 2.7L2 0.5L3.8 2.7ZM0.2 4.3L2 6.5L3.8 4.3Z" fill="#f0f0f0"/></svg>
<span id="t165" class="t " style="left:715.5px;top:452.8px;font-size:8px;line-height:12px;color:#f0f0f0;font-weight:400;">W:</span>
<div class="r" style="left:729px;top:454.3px;width:35.5px;height:9px;background:#656565;"></div>
<span id="t166" class="t " style="left:731.2px;top:453px;font-size:8px;line-height:12px;color:#efefef;font-weight:400;">1.0</span>
<svg style="left:758.3px;top:455.3px" width="4" height="7" viewBox="0 0 4 7"><path d="M0.2 2.7L2 0.5L3.8 2.7ZM0.2 4.3L2 6.5L3.8 4.3Z" fill="#f0f0f0"/></svg>
<span id="t167" class="t " style="left:656px;top:466px;font-size:8px;line-height:12px;color:#f0f0f0;font-weight:400;">V:</span>
<div class="r" style="left:673px;top:467.5px;width:34.5px;height:9px;background:#656565;"></div>
<span id="t168" class="t " style="left:675.2px;top:466.2px;font-size:8px;line-height:12px;color:#efefef;font-weight:400;">0.0</span>
<svg style="left:701.3px;top:468.5px" width="4" height="7" viewBox="0 0 4 7"><path d="M0.2 2.7L2 0.5L3.8 2.7ZM0.2 4.3L2 6.5L3.8 4.3Z" fill="#f0f0f0"/></svg>
<span id="t169" class="t " style="left:715.5px;top:466px;font-size:8px;line-height:12px;color:#f0f0f0;font-weight:400;">H:</span>
<div class="r" style="left:729px;top:467.5px;width:35.5px;height:9px;background:#656565;"></div>
<span id="t170" class="t " style="left:731.2px;top:466.2px;font-size:8px;line-height:12px;color:#efefef;font-weight:400;">1.0</span>
<svg style="left:758.3px;top:468.5px" width="4" height="7" viewBox="0 0 4 7"><path d="M0.2 2.7L2 0.5L3.8 2.7ZM0.2 4.3L2 6.5L3.8 4.3Z" fill="#f0f0f0"/></svg>
<div class="r" style="left:662px;top:482.5px;width:7.4px;height:7.4px;background:#5c5c5c;"></div>
<span id="t171" class="t " style="left:673px;top:481.1px;font-size:8px;line-height:12px;color:#8a8a8a;font-weight:400;transform:scaleX(0.7626);">ジッター配置 :</span>
<div class="r" style="left:731.5px;top:481.8px;width:33px;height:9px;background:#585858;"></div>
<span id="t172" class="t " style="left:733.7px;top:480.5px;font-size:8px;line-height:12px;color:#8a8a8a;font-weight:400;">1.0</span>
<svg style="left:758.3px;top:482.8px" width="4" height="7" viewBox="0 0 4 7"><path d="M0.2 2.7L2 0.5L3.8 2.7ZM0.2 4.3L2 6.5L3.8 4.3Z" fill="#8a8a8a"/></svg>
<div class="r" style="left:563px;top:434px;width:83.5px;height:38.5px;background:transparent;border:1px solid #3a3a3a;border-radius:2px;"></div>
<div class="r" style="left:564.5px;top:431px;width:22px;height:6px;background:#4f4f4f;"></div>
<span id="t173" class="t " style="left:565.5px;top:428.8px;font-size:8px;line-height:12px;color:#f0f0f0;font-weight:700;transform:scaleX(0.5967);">フィルタ</span>
<div class="r" style="left:572.6px;top:440.2px;width:8.8px;height:8.8px;background:#6c6c6c;border-radius:50%;"></div>
<div class="r" style="left:574.4px;top:442px;width:5.2px;height:5.2px;background:#ececec;border-radius:50%;"></div>
<span id="t174" class="t " style="left:584px;top:439.8px;font-size:8px;line-height:12px;color:#f0f0f0;font-weight:400;transform:scaleX(0.6250);">ピラミッド</span>
<div class="r" style="left:572.6px;top:450.4px;width:8.8px;height:8.8px;background:#6c6c6c;border-radius:50%;"></div>
<span id="t175" class="t " style="left:584px;top:450px;font-size:8px;line-height:12px;color:#f0f0f0;font-weight:400;transform:scaleX(0.8750);">合計領域</span>
<div class="r" style="left:572.6px;top:460.2px;width:8.8px;height:8.8px;background:#6c6c6c;border-radius:50%;"></div>
<span id="t176" class="t " style="left:584px;top:459.8px;font-size:8px;line-height:12px;color:#f0f0f0;font-weight:400;transform:scaleX(0.7500);">なし</span>
<div class="r" style="left:563px;top:481.5px;width:83.5px;height:30px;background:transparent;border:1px solid #3a3a3a;border-radius:2px;"></div>
<div class="r" style="left:564.5px;top:478px;width:56px;height:6px;background:#4f4f4f;"></div>
<span id="t177" class="t " style="left:565.5px;top:476.1px;font-size:8px;line-height:12px;color:#f0f0f0;font-weight:700;transform:scaleX(0.7462);">モノ チャネル出力 :</span>
<div class="r" style="left:572.6px;top:490.1px;width:8.8px;height:8.8px;background:#6c6c6c;border-radius:50%;"></div>
<div class="r" style="left:574.4px;top:491.9px;width:5.2px;height:5.2px;background:#ececec;border-radius:50%;"></div>
<span id="t178" class="t " style="left:584px;top:489.6px;font-size:8px;line-height:12px;color:#f0f0f0;font-weight:400;transform:scaleX(0.7873);">RGB 強度</span>
<div class="r" style="left:787.6px;top:57px;width:2.6px;height:442px;background:#2e2e2e;"></div>
<div class="r" style="left:9px;top:498.5px;width:782px;height:17px;background:#444444;border-top:1px solid #2c2c2c;"></div>
<svg style="left:11px;top:502px" width="13" height="10" viewBox="11 502 13 10"><path d="M12.1 505.9L14 506.4L15.4 506.2L17.4 503.9L19.4 506.2L20.6 506.2Q22.3 506.6 22 508Q21.6 509.5 20.3 509.6L19.6 510.7H15.2L13.6 508.4Z" fill="#ececec"/><circle cx="20.7" cy="507.8" r="0.6" fill="#555"/></svg>
<span id="t179" class="t " style="left:27px;top:501.3px;font-size:7.6px;line-height:11.6px;color:#f0f0f0;font-weight:400;transform:scaleX(0.6628);">レンダリング</span>
<span id="t180" class="t " style="left:61.2px;top:501.3px;font-size:7.6px;line-height:11.6px;color:#f0f0f0;font-weight:400;transform:scaleX(0.6936);">キュー</span>
<span id="t181" class="t " style="left:80.9px;top:500.7px;font-size:7.6px;line-height:11.6px;color:#f0f0f0;font-weight:400;transform:scaleX(0.7689);">:...</span>
<span id="t182" class="t " style="left:92.7px;top:501.3px;font-size:7.6px;line-height:11.6px;color:#f0f0f0;font-weight:400;transform:scaleX(0.6628);">レンダリング</span>
<span id="t183" class="t " style="left:126.6px;top:501.3px;font-size:7.6px;line-height:11.6px;color:#f0f0f0;font-weight:400;transform:scaleX(0.6788);">"マップ</span>
<span id="t184" class="t " style="left:147.8px;top:500.8px;font-size:7.6px;line-height:11.6px;color:#f0f0f0;font-weight:400;transform:scaleX(0.9346);">#3</span>
<span id="t185" class="t " style="left:160.6px;top:500.8px;font-size:7.6px;line-height:11.6px;color:#f0f0f0;font-weight:400;">(</span>
<span id="t186" class="t " style="left:164.9px;top:500.8px;font-size:7.6px;line-height:11.6px;color:#f0f0f0;font-weight:400;transform:scaleX(0.8291);">Bitmap</span>
<span id="t187" class="t " style="left:188.3px;top:500.8px;font-size:7.6px;line-height:11.6px;color:#f0f0f0;font-weight:400;transform:scaleX(0.9934);">)"</span>
<span id="t188" class="t " style="left:195px;top:501.3px;font-size:7.6px;line-height:11.6px;color:#f0f0f0;font-weight:400;transform:scaleX(0.8691);">終了</span>
<div class="r" style="left:662.8px;top:500.8px;width:35px;height:12.5px;background:#626262;"></div>
<span id="t189" class="t " style="left:665.4px;top:501.05px;font-size:8.5px;line-height:12.5px;color:#f0f0f0;font-weight:400;transform:scaleX(0.8460);">100%</span>
<svg style="left:689px;top:505.6px" width="5" height="4" viewBox="0 0 5 4"><path d="M0.2 0.3H4.8L2.5 3.8Z" fill="#f0f0f0"/></svg>
<svg style="left:701.8px;top:502.6px" width="9" height="9" viewBox="0 0 8 9"><path d="M2.2 5.2L1 3.8Q0.4 3 1.2 2.7Q1.8 2.6 2.4 3.3V1.2Q2.4 0.5 3 0.5Q3.5 0.5 3.6 1.2V0.8Q3.7 0.1 4.3 0.1Q4.9 0.1 4.9 0.8V1.1Q5 0.5 5.5 0.5Q6.1 0.5 6.1 1.2V1.8Q6.2 1.3 6.7 1.3Q7.2 1.4 7.2 2V5.5Q7.2 7.2 6.2 8.5H3.2Q2.6 7 2.2 5.2Z" fill="#e8e8e8"/></svg>
<svg style="left:716px;top:502.2px" width="10" height="10" viewBox="0 0 10 10"><circle cx="6" cy="3.8" r="2.9" fill="none" stroke="#ececec" stroke-width="1.2"/><path d="M3.8 6L0.8 9.2" stroke="#ececec" stroke-width="1.6"/></svg>
<svg style="left:730.5px;top:502px" width="10.5" height="10" viewBox="0 0 10.5 10"><rect x="0.5" y="0.5" width="9.5" height="6.5" fill="none" stroke="#d8d8d8" stroke-width="0.8" stroke-dasharray="1.6 1.1"/><circle cx="5.8" cy="4.6" r="2.3" fill="none" stroke="#2ec4c4" stroke-width="1.1"/><path d="M4 6.4L1.2 9.4" stroke="#2ec4c4" stroke-width="1.5"/></svg>
<svg style="left:745.7px;top:502px" width="10.5" height="10" viewBox="0 0 10.5 10"><path d="M0.5 2.4V0.5H2.4M8.1 0.5H10V2.4M10 7.6V9.5H8.1M2.4 9.5H0.5V7.6" fill="none" stroke="#e0e0e0" stroke-width="0.9"/><path d="M5.25 1.4L8.6 3.1V6.9L5.25 8.6L1.9 6.9V3.1Z" fill="#ececec"/><path d="M1.9 3.1L5.25 4.9L8.6 3.1M5.25 4.9V8.6" stroke="#555" stroke-width="0.6" fill="none"/></svg>
<svg style="left:761px;top:502px" width="10.5" height="10" viewBox="0 0 10.5 10"><path d="M0.5 2.4V0.5H2.4M8.1 0.5H10V2.4M10 7.6V9.5H8.1M2.4 9.5H0.5V7.6" fill="none" stroke="#e0e0e0" stroke-width="0.9"/><path d="M5.25 1.4L8.6 3.1V6.9L5.25 8.6L1.9 6.9V3.1Z" fill="#2ec4c4"/><path d="M1.9 3.1L5.25 4.9L8.6 3.1M5.25 4.9V8.6" stroke="#1a6a6a" stroke-width="0.6" fill="none"/></svg>
<svg style="left:776.5px;top:502px" width="10.5" height="10" viewBox="0 0 10.5 10"><path d="M0.5 2.4V0.5H2.4M8.1 0.5H10V2.4M10 7.6V9.5H8.1M2.4 9.5H0.5V7.6" fill="none" stroke="#e0e0e0" stroke-width="0.9"/><g transform="translate(1.4,0.8) scale(1.0)"><path d="M2.2 5.2L1 3.8Q0.4 3 1.2 2.7Q1.8 2.6 2.4 3.3V1.2Q2.4 0.5 3 0.5Q3.5 0.5 3.6 1.2V0.8Q3.7 0.1 4.3 0.1Q4.9 0.1 4.9 0.8V1.1Q5 0.5 5.5 0.5Q6.1 0.5 6.1 1.2V1.8Q6.2 1.3 6.7 1.3Q7.2 1.4 7.2 2V5.5Q7.2 7.2 6.2 8.5H3.2Q2.6 7 2.2 5.2Z" fill="#2ec4c4"/></g></svg>
</div></div>
</body>
</html>
